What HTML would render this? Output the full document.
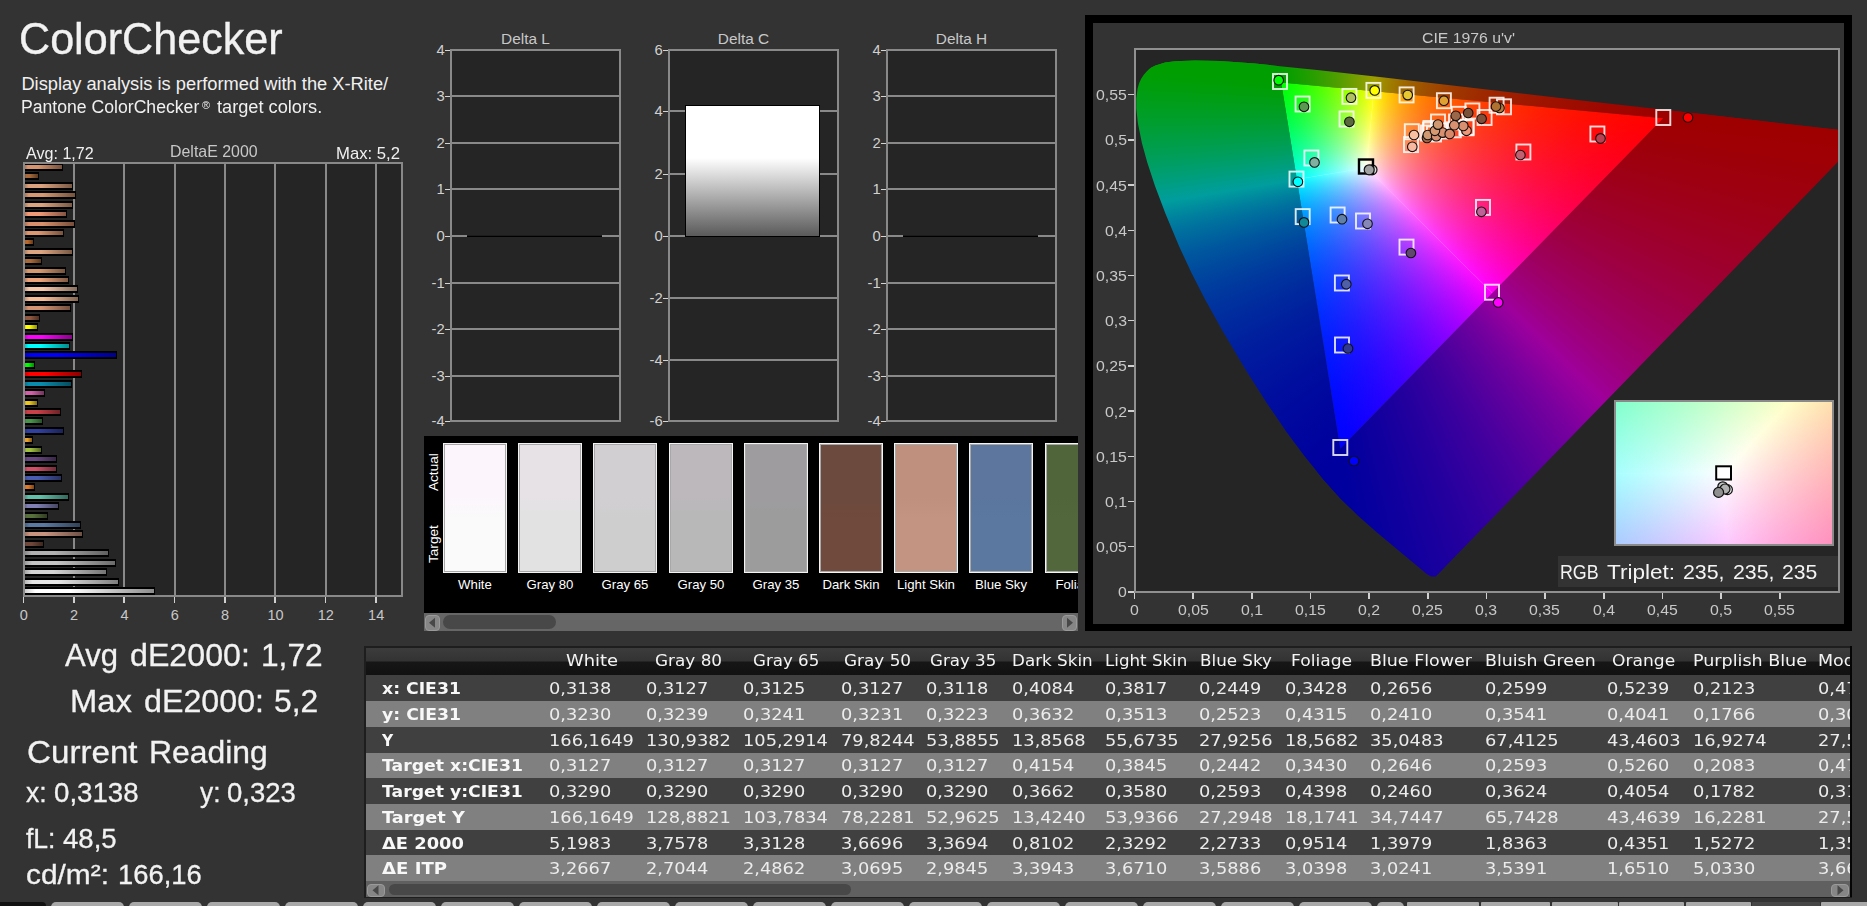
<!DOCTYPE html><html><head><meta charset="utf-8"><title>ColorChecker</title><style>
html,body{margin:0;padding:0}
body{width:1867px;height:906px;background:#333;overflow:hidden;position:relative;font-family:"Liberation Sans",sans-serif}
.t{position:absolute;white-space:nowrap;line-height:1;transform-origin:0 0}
.b{position:absolute}
.ly{position:absolute;left:0;top:0;width:100%;height:100%}
.mu{mix-blend-mode:multiply}
</style></head><body>
<span class="t" style="left:19.3px;top:17.7px;font-size:43.6px;color:#f2f2f2;transform:scaleX(0.9891);-webkit-text-stroke:.35px #f2f2f2;">ColorChecker</span>
<span class="t" style="left:21.4px;top:74.8px;font-size:18.3px;color:#f0f0f0;">Display analysis is performed with the X-Rite/</span>
<span class="t" style="left:21.4px;top:98.3px;font-size:18.3px;color:#f0f0f0;transform:scaleX(0.9638);">Pantone ColorChecker</span>
<span class="t" style="left:202.2px;top:100.2px;font-size:11px;color:#f0f0f0;transform:scaleX(0.9895);">®</span>
<span class="t" style="left:216.7px;top:98.3px;font-size:18.3px;color:#f0f0f0;transform:scaleX(0.9955);">target colors.</span>
<div class="b" style="left:23px;top:162px;width:380px;height:435px;background:#898989;"></div>
<div class="b" style="left:25px;top:164px;width:376px;height:431px;background:#252525;"></div>
<div class="b" style="left:73px;top:164px;width:2px;height:431px;background:#898989;"></div>
<div class="b" style="left:123px;top:164px;width:2px;height:431px;background:#898989;"></div>
<div class="b" style="left:174px;top:164px;width:2px;height:431px;background:#898989;"></div>
<div class="b" style="left:224px;top:164px;width:2px;height:431px;background:#898989;"></div>
<div class="b" style="left:274px;top:164px;width:2px;height:431px;background:#898989;"></div>
<div class="b" style="left:325px;top:164px;width:2px;height:431px;background:#898989;"></div>
<div class="b" style="left:375px;top:164px;width:2px;height:431px;background:#898989;"></div>
<div class="b" style="left:22.6px;top:597px;width:1.7px;height:5.6px;background:#d0d0d0;"></div>
<span class="t" style="left:19.8px;top:608.2px;font-size:14.5px;color:#c8c8c8;">0</span>
<div class="b" style="left:72.94px;top:597px;width:1.7px;height:5.6px;background:#d0d0d0;"></div>
<span class="t" style="left:70.1px;top:608.2px;font-size:14.5px;color:#c8c8c8;">2</span>
<div class="b" style="left:123.28px;top:597px;width:1.7px;height:5.6px;background:#d0d0d0;"></div>
<span class="t" style="left:120.4px;top:608.2px;font-size:14.5px;color:#c8c8c8;">4</span>
<div class="b" style="left:173.62px;top:597px;width:1.7px;height:5.6px;background:#d0d0d0;"></div>
<span class="t" style="left:170.8px;top:608.2px;font-size:14.5px;color:#c8c8c8;">6</span>
<div class="b" style="left:223.96px;top:597px;width:1.7px;height:5.6px;background:#d0d0d0;"></div>
<span class="t" style="left:221.1px;top:608.2px;font-size:14.5px;color:#c8c8c8;">8</span>
<div class="b" style="left:274.30000000000007px;top:597px;width:1.7px;height:5.6px;background:#d0d0d0;"></div>
<span class="t" style="left:267.4px;top:608.2px;font-size:14.5px;color:#c8c8c8;">10</span>
<div class="b" style="left:324.64000000000004px;top:597px;width:1.7px;height:5.6px;background:#d0d0d0;"></div>
<span class="t" style="left:317.8px;top:608.2px;font-size:14.5px;color:#c8c8c8;">12</span>
<div class="b" style="left:374.98px;top:597px;width:1.7px;height:5.6px;background:#d0d0d0;"></div>
<span class="t" style="left:368.1px;top:608.2px;font-size:14.5px;color:#c8c8c8;">14</span>
<span class="t" style="left:25.9px;top:146.3px;font-size:15.9px;color:#f0f0f0;transform:scaleX(1.0126);">Avg: 1,72</span>
<span class="t" style="left:169.6px;top:143.7px;font-size:15.7px;color:#c8c8c8;transform:scaleX(1.0147);">DeltaE 2000</span>
<span class="t" style="left:336.2px;top:146.3px;font-size:15.9px;color:#f0f0f0;transform:scaleX(1.0496);">Max: 5,2</span>
<div class="b" style="left:25px;top:164px;width:38px;height:7px;background:#000;"></div>
<div class="b" style="left:25px;top:165px;width:37px;height:4px;background:linear-gradient(90deg,#ac7658 0,#d8946e 8%,#d8946e 35%,#76513c 100%);"></div>
<div class="b" style="left:25px;top:172px;width:14px;height:8px;background:#000;"></div>
<div class="b" style="left:25px;top:174px;width:13px;height:4px;background:linear-gradient(90deg,#865430 0,#a86a3c 8%,#a86a3c 35%,#5c3a21 100%);"></div>
<div class="b" style="left:25px;top:182px;width:48px;height:8px;background:#000;"></div>
<div class="b" style="left:25px;top:184px;width:47px;height:4px;background:linear-gradient(90deg,#b08164 0,#dca27e 8%,#dca27e 35%,#795945 100%);"></div>
<div class="b" style="left:25px;top:191px;width:51px;height:8px;background:#000;"></div>
<div class="b" style="left:25px;top:193px;width:50px;height:4px;background:linear-gradient(90deg,#ab795b 0,#d69872 8%,#d69872 35%,#75533e 100%);"></div>
<div class="b" style="left:25px;top:201px;width:48px;height:8px;background:#000;"></div>
<div class="b" style="left:25px;top:203px;width:47px;height:4px;background:linear-gradient(90deg,#b08364 0,#dca47e 8%,#dca47e 35%,#795a45 100%);"></div>
<div class="b" style="left:25px;top:210px;width:42px;height:8px;background:#000;"></div>
<div class="b" style="left:25px;top:212px;width:41px;height:4px;background:linear-gradient(90deg,#c07b60 0,#f09a78 8%,#f09a78 35%,#845442 100%);"></div>
<div class="b" style="left:25px;top:220px;width:50px;height:8px;background:#000;"></div>
<div class="b" style="left:25px;top:222px;width:49px;height:4px;background:linear-gradient(90deg,#ac7356 0,#d8906c 8%,#d8906c 35%,#764f3b 100%);"></div>
<div class="b" style="left:25px;top:229px;width:39px;height:8px;background:#000;"></div>
<div class="b" style="left:25px;top:231px;width:38px;height:4px;background:linear-gradient(90deg,#b07859 0,#dc9670 8%,#dc9670 35%,#79523d 100%);"></div>
<div class="b" style="left:25px;top:238px;width:9px;height:8px;background:#000;"></div>
<div class="b" style="left:25px;top:240px;width:8px;height:4px;background:linear-gradient(90deg,#935323 0,#b8682c 8%,#b8682c 35%,#653918 100%);"></div>
<div class="b" style="left:25px;top:248px;width:48px;height:8px;background:#000;"></div>
<div class="b" style="left:25px;top:250px;width:47px;height:4px;background:linear-gradient(90deg,#b08366 0,#dca480 8%,#dca480 35%,#795a46 100%);"></div>
<div class="b" style="left:25px;top:257px;width:17px;height:8px;background:#000;"></div>
<div class="b" style="left:25px;top:259px;width:16px;height:4px;background:linear-gradient(90deg,#86542e 0,#a86a3a 8%,#a86a3a 35%,#5c3a1f 100%);"></div>
<div class="b" style="left:25px;top:267px;width:41px;height:8px;background:#000;"></div>
<div class="b" style="left:25px;top:269px;width:40px;height:4px;background:linear-gradient(90deg,#ab7b59 0,#d69a70 8%,#d69a70 35%,#75543d 100%);"></div>
<div class="b" style="left:25px;top:276px;width:44px;height:8px;background:#000;"></div>
<div class="b" style="left:25px;top:278px;width:43px;height:4px;background:linear-gradient(90deg,#bc8363 0,#eca47c 8%,#eca47c 35%,#815a44 100%);"></div>
<div class="b" style="left:25px;top:285px;width:53px;height:8px;background:#000;"></div>
<div class="b" style="left:25px;top:287px;width:52px;height:4px;background:linear-gradient(90deg,#c4a089 0,#f6c8ac 8%,#f6c8ac 35%,#876e5e 100%);"></div>
<div class="b" style="left:25px;top:295px;width:54px;height:8px;background:#000;"></div>
<div class="b" style="left:25px;top:297px;width:53px;height:4px;background:linear-gradient(90deg,#c39679 0,#f4bc98 8%,#f4bc98 35%,#866753 100%);"></div>
<div class="b" style="left:25px;top:304px;width:46px;height:8px;background:#000;"></div>
<div class="b" style="left:25px;top:306px;width:45px;height:4px;background:linear-gradient(90deg,#a9765c 0,#d49474 8%,#d49474 35%,#74513f 100%);"></div>
<div class="b" style="left:25px;top:314px;width:15px;height:8px;background:#000;"></div>
<div class="b" style="left:25px;top:316px;width:14px;height:4px;background:linear-gradient(90deg,#734633 0,#905840 8%,#905840 35%,#4f3023 100%);"></div>
<div class="b" style="left:25px;top:323px;width:13px;height:8px;background:#000;"></div>
<div class="b" style="left:25px;top:325px;width:12px;height:4px;background:linear-gradient(90deg,#cccc00 0,#ffff00 8%,#ffff00 35%,#8c8c00 100%);"></div>
<div class="b" style="left:25px;top:333px;width:48px;height:8px;background:#000;"></div>
<div class="b" style="left:25px;top:335px;width:47px;height:4px;background:linear-gradient(90deg,#cc00cc 0,#ff00ff 8%,#ff00ff 35%,#8c008c 100%);"></div>
<div class="b" style="left:25px;top:342px;width:45px;height:8px;background:#000;"></div>
<div class="b" style="left:25px;top:344px;width:44px;height:4px;background:linear-gradient(90deg,#00cccc 0,#00ffff 8%,#00ffff 35%,#008c8c 100%);"></div>
<div class="b" style="left:25px;top:351px;width:92px;height:8px;background:#000;"></div>
<div class="b" style="left:25px;top:353px;width:91px;height:4px;background:linear-gradient(90deg,#0000cc 0,#0000ff 8%,#0000ff 35%,#00008c 100%);"></div>
<div class="b" style="left:25px;top:361px;width:10px;height:8px;background:#000;"></div>
<div class="b" style="left:25px;top:363px;width:9px;height:4px;background:linear-gradient(90deg,#00cc00 0,#00ff00 8%,#00ff00 35%,#008c00 100%);"></div>
<div class="b" style="left:25px;top:370px;width:57px;height:8px;background:#000;"></div>
<div class="b" style="left:25px;top:372px;width:56px;height:4px;background:linear-gradient(90deg,#cc0000 0,#ff0000 8%,#ff0000 35%,#8c0000 100%);"></div>
<div class="b" style="left:25px;top:380px;width:47px;height:8px;background:#000;"></div>
<div class="b" style="left:25px;top:382px;width:46px;height:4px;background:linear-gradient(90deg,#087089 0,#0a8cac 8%,#0a8cac 35%,#054d5e 100%);"></div>
<div class="b" style="left:25px;top:389px;width:20px;height:8px;background:#000;"></div>
<div class="b" style="left:25px;top:391px;width:19px;height:4px;background:linear-gradient(90deg,#a64c86 0,#d060a8 8%,#d060a8 35%,#72345c 100%);"></div>
<div class="b" style="left:25px;top:399px;width:13px;height:8px;background:#000;"></div>
<div class="b" style="left:25px;top:401px;width:12px;height:4px;background:linear-gradient(90deg,#bca019 0,#ecc820 8%,#ecc820 35%,#816e11 100%);"></div>
<div class="b" style="left:25px;top:408px;width:36px;height:8px;background:#000;"></div>
<div class="b" style="left:25px;top:410px;width:35px;height:4px;background:linear-gradient(90deg,#a03339 0,#c84048 8%,#c84048 35%,#6e2327 100%);"></div>
<div class="b" style="left:25px;top:417px;width:18px;height:8px;background:#000;"></div>
<div class="b" style="left:25px;top:419px;width:17px;height:4px;background:linear-gradient(90deg,#39763b 0,#48944a 8%,#48944a 35%,#275128 100%);"></div>
<div class="b" style="left:25px;top:427px;width:39px;height:8px;background:#000;"></div>
<div class="b" style="left:25px;top:429px;width:38px;height:4px;background:linear-gradient(90deg,#263380 0,#3040a0 8%,#3040a0 35%,#1a2358 100%);"></div>
<div class="b" style="left:25px;top:436px;width:8px;height:8px;background:#000;"></div>
<div class="b" style="left:25px;top:438px;width:7px;height:4px;background:linear-gradient(90deg,#b98023 0,#e8a02c 8%,#e8a02c 35%,#7f5818 100%);"></div>
<div class="b" style="left:25px;top:446px;width:17px;height:8px;background:#000;"></div>
<div class="b" style="left:25px;top:448px;width:16px;height:4px;background:linear-gradient(90deg,#809933 0,#a0c040 8%,#a0c040 35%,#586923 100%);"></div>
<div class="b" style="left:25px;top:455px;width:32px;height:8px;background:#000;"></div>
<div class="b" style="left:25px;top:457px;width:31px;height:4px;background:linear-gradient(90deg,#533966 0,#684880 8%,#684880 35%,#392746 100%);"></div>
<div class="b" style="left:25px;top:465px;width:32px;height:8px;background:#000;"></div>
<div class="b" style="left:25px;top:467px;width:31px;height:4px;background:linear-gradient(90deg,#a64053 0,#d05068 8%,#d05068 35%,#722c39 100%);"></div>
<div class="b" style="left:25px;top:474px;width:37px;height:8px;background:#000;"></div>
<div class="b" style="left:25px;top:476px;width:36px;height:4px;background:linear-gradient(90deg,#3b498c 0,#4a5cb0 8%,#4a5cb0 35%,#283260 100%);"></div>
<div class="b" style="left:25px;top:483px;width:10px;height:8px;background:#000;"></div>
<div class="b" style="left:25px;top:485px;width:9px;height:4px;background:linear-gradient(90deg,#b36120 0,#e07a28 8%,#e07a28 35%,#7b4316 100%);"></div>
<div class="b" style="left:25px;top:493px;width:44px;height:8px;background:#000;"></div>
<div class="b" style="left:25px;top:495px;width:43px;height:4px;background:linear-gradient(90deg,#4c9986 0,#60c0a8 8%,#60c0a8 35%,#34695c 100%);"></div>
<div class="b" style="left:25px;top:502px;width:34px;height:8px;background:#000;"></div>
<div class="b" style="left:25px;top:504px;width:33px;height:4px;background:linear-gradient(90deg,#666690 0,#8080b4 8%,#8080b4 35%,#464663 100%);"></div>
<div class="b" style="left:25px;top:512px;width:23px;height:8px;background:#000;"></div>
<div class="b" style="left:25px;top:514px;width:22px;height:4px;background:linear-gradient(90deg,#465930 0,#58703c 8%,#58703c 35%,#303d21 100%);"></div>
<div class="b" style="left:25px;top:521px;width:56px;height:8px;background:#000;"></div>
<div class="b" style="left:25px;top:523px;width:55px;height:4px;background:linear-gradient(90deg,#486080 0,#5a78a0 8%,#5a78a0 35%,#314258 100%);"></div>
<div class="b" style="left:25px;top:530px;width:58px;height:8px;background:#000;"></div>
<div class="b" style="left:25px;top:532px;width:57px;height:4px;background:linear-gradient(90deg,#a07666 0,#c89480 8%,#c89480 35%,#6e5146 100%);"></div>
<div class="b" style="left:25px;top:540px;width:19px;height:8px;background:#000;"></div>
<div class="b" style="left:25px;top:542px;width:18px;height:4px;background:linear-gradient(90deg,#59392e 0,#70483a 8%,#70483a 35%,#3d271f 100%);"></div>
<div class="b" style="left:25px;top:549px;width:84px;height:8px;background:#000;"></div>
<div class="b" style="left:25px;top:551px;width:83px;height:4px;background:linear-gradient(90deg,#8c8c8c 0,#b0b0b0 8%,#b0b0b0 35%,#606060 100%);"></div>
<div class="b" style="left:25px;top:559px;width:91px;height:8px;background:#000;"></div>
<div class="b" style="left:25px;top:561px;width:90px;height:4px;background:linear-gradient(90deg,#9c9c9c 0,#c4c4c4 8%,#c4c4c4 35%,#6b6b6b 100%);"></div>
<div class="b" style="left:25px;top:568px;width:82px;height:8px;background:#000;"></div>
<div class="b" style="left:25px;top:570px;width:81px;height:4px;background:linear-gradient(90deg,#a9a9a9 0,#d4d4d4 8%,#d4d4d4 35%,#747474 100%);"></div>
<div class="b" style="left:25px;top:578px;width:94px;height:8px;background:#000;"></div>
<div class="b" style="left:25px;top:580px;width:93px;height:4px;background:linear-gradient(90deg,#b8b8b8 0,#e6e6e6 8%,#e6e6e6 35%,#7e7e7e 100%);"></div>
<div class="b" style="left:25px;top:587px;width:130px;height:8px;background:#000;"></div>
<div class="b" style="left:25px;top:589px;width:129px;height:4px;background:linear-gradient(90deg,#cccccc 0,#ffffff 8%,#ffffff 35%,#8c8c8c 100%);"></div>
<div class="b" style="left:23px;top:162px;width:2px;height:435px;background:#898989;"></div>
<div class="b" style="left:450px;top:49px;width:171px;height:373px;background:#898989;"></div>
<div class="b" style="left:452px;top:51px;width:167px;height:369px;background:#252525;"></div>
<div class="b" style="left:445px;top:49.6px;width:5px;height:1.5px;background:#d4d4d4;"></div>
<span class="t" style="left:436.6px;top:42.7px;font-size:14.8px;color:#d0d0d0;">4</span>
<div class="b" style="left:452px;top:95.3px;width:167px;height:1.9px;background:#898989;"></div>
<div class="b" style="left:445px;top:95.6px;width:5px;height:1.5px;background:#d4d4d4;"></div>
<span class="t" style="left:436.6px;top:88.7px;font-size:14.8px;color:#d0d0d0;">3</span>
<div class="b" style="left:452px;top:142.3px;width:167px;height:1.9px;background:#898989;"></div>
<div class="b" style="left:445px;top:142.6px;width:5px;height:1.5px;background:#d4d4d4;"></div>
<span class="t" style="left:436.6px;top:135.7px;font-size:14.8px;color:#d0d0d0;">2</span>
<div class="b" style="left:452px;top:188.3px;width:167px;height:1.9px;background:#898989;"></div>
<div class="b" style="left:445px;top:188.6px;width:5px;height:1.5px;background:#d4d4d4;"></div>
<span class="t" style="left:436.6px;top:181.7px;font-size:14.8px;color:#d0d0d0;">1</span>
<div class="b" style="left:452px;top:235.3px;width:167px;height:1.9px;background:#898989;"></div>
<div class="b" style="left:445px;top:235.6px;width:5px;height:1.5px;background:#d4d4d4;"></div>
<span class="t" style="left:436.6px;top:228.7px;font-size:14.8px;color:#d0d0d0;">0</span>
<div class="b" style="left:452px;top:282.3px;width:167px;height:1.9px;background:#898989;"></div>
<div class="b" style="left:445px;top:282.6px;width:5px;height:1.5px;background:#d4d4d4;"></div>
<span class="t" style="left:431.6px;top:275.7px;font-size:14.8px;color:#d0d0d0;">-1</span>
<div class="b" style="left:452px;top:328.3px;width:167px;height:1.9px;background:#898989;"></div>
<div class="b" style="left:445px;top:328.6px;width:5px;height:1.5px;background:#d4d4d4;"></div>
<span class="t" style="left:431.6px;top:321.7px;font-size:14.8px;color:#d0d0d0;">-2</span>
<div class="b" style="left:452px;top:375.3px;width:167px;height:1.9px;background:#898989;"></div>
<div class="b" style="left:445px;top:375.6px;width:5px;height:1.5px;background:#d4d4d4;"></div>
<span class="t" style="left:431.6px;top:368.7px;font-size:14.8px;color:#d0d0d0;">-3</span>
<div class="b" style="left:445px;top:420.6px;width:5px;height:1.5px;background:#d4d4d4;"></div>
<span class="t" style="left:431.6px;top:413.7px;font-size:14.8px;color:#d0d0d0;">-4</span>
<span class="t" style="left:501.1px;top:31.2px;font-size:15.4px;color:#c8c8c8;">Delta L</span>
<div class="b" style="left:668px;top:49px;width:171px;height:373px;background:#898989;"></div>
<div class="b" style="left:670px;top:51px;width:167px;height:369px;background:#252525;"></div>
<div class="b" style="left:663px;top:49.6px;width:5px;height:1.5px;background:#d4d4d4;"></div>
<span class="t" style="left:654.6px;top:42.7px;font-size:14.8px;color:#d0d0d0;">6</span>
<div class="b" style="left:670px;top:110.3px;width:167px;height:1.9px;background:#898989;"></div>
<div class="b" style="left:663px;top:110.6px;width:5px;height:1.5px;background:#d4d4d4;"></div>
<span class="t" style="left:654.6px;top:103.7px;font-size:14.8px;color:#d0d0d0;">4</span>
<div class="b" style="left:670px;top:173.3px;width:167px;height:1.9px;background:#898989;"></div>
<div class="b" style="left:663px;top:173.6px;width:5px;height:1.5px;background:#d4d4d4;"></div>
<span class="t" style="left:654.6px;top:166.7px;font-size:14.8px;color:#d0d0d0;">2</span>
<div class="b" style="left:670px;top:235.3px;width:167px;height:1.9px;background:#898989;"></div>
<div class="b" style="left:663px;top:235.6px;width:5px;height:1.5px;background:#d4d4d4;"></div>
<span class="t" style="left:654.6px;top:228.7px;font-size:14.8px;color:#d0d0d0;">0</span>
<div class="b" style="left:670px;top:297.3px;width:167px;height:1.9px;background:#898989;"></div>
<div class="b" style="left:663px;top:297.6px;width:5px;height:1.5px;background:#d4d4d4;"></div>
<span class="t" style="left:649.6px;top:290.7px;font-size:14.8px;color:#d0d0d0;">-2</span>
<div class="b" style="left:670px;top:359.3px;width:167px;height:1.9px;background:#898989;"></div>
<div class="b" style="left:663px;top:359.6px;width:5px;height:1.5px;background:#d4d4d4;"></div>
<span class="t" style="left:649.6px;top:352.7px;font-size:14.8px;color:#d0d0d0;">-4</span>
<div class="b" style="left:663px;top:420.6px;width:5px;height:1.5px;background:#d4d4d4;"></div>
<span class="t" style="left:649.6px;top:413.7px;font-size:14.8px;color:#d0d0d0;">-6</span>
<span class="t" style="left:717.8px;top:31.2px;font-size:15.4px;color:#c8c8c8;">Delta C</span>
<div class="b" style="left:886px;top:49px;width:171px;height:373px;background:#898989;"></div>
<div class="b" style="left:888px;top:51px;width:167px;height:369px;background:#252525;"></div>
<div class="b" style="left:881px;top:49.6px;width:5px;height:1.5px;background:#d4d4d4;"></div>
<span class="t" style="left:872.6px;top:42.7px;font-size:14.8px;color:#d0d0d0;">4</span>
<div class="b" style="left:888px;top:95.3px;width:167px;height:1.9px;background:#898989;"></div>
<div class="b" style="left:881px;top:95.6px;width:5px;height:1.5px;background:#d4d4d4;"></div>
<span class="t" style="left:872.6px;top:88.7px;font-size:14.8px;color:#d0d0d0;">3</span>
<div class="b" style="left:888px;top:142.3px;width:167px;height:1.9px;background:#898989;"></div>
<div class="b" style="left:881px;top:142.6px;width:5px;height:1.5px;background:#d4d4d4;"></div>
<span class="t" style="left:872.6px;top:135.7px;font-size:14.8px;color:#d0d0d0;">2</span>
<div class="b" style="left:888px;top:188.3px;width:167px;height:1.9px;background:#898989;"></div>
<div class="b" style="left:881px;top:188.6px;width:5px;height:1.5px;background:#d4d4d4;"></div>
<span class="t" style="left:872.6px;top:181.7px;font-size:14.8px;color:#d0d0d0;">1</span>
<div class="b" style="left:888px;top:235.3px;width:167px;height:1.9px;background:#898989;"></div>
<div class="b" style="left:881px;top:235.6px;width:5px;height:1.5px;background:#d4d4d4;"></div>
<span class="t" style="left:872.6px;top:228.7px;font-size:14.8px;color:#d0d0d0;">0</span>
<div class="b" style="left:888px;top:282.3px;width:167px;height:1.9px;background:#898989;"></div>
<div class="b" style="left:881px;top:282.6px;width:5px;height:1.5px;background:#d4d4d4;"></div>
<span class="t" style="left:867.6px;top:275.7px;font-size:14.8px;color:#d0d0d0;">-1</span>
<div class="b" style="left:888px;top:328.3px;width:167px;height:1.9px;background:#898989;"></div>
<div class="b" style="left:881px;top:328.6px;width:5px;height:1.5px;background:#d4d4d4;"></div>
<span class="t" style="left:867.6px;top:321.7px;font-size:14.8px;color:#d0d0d0;">-2</span>
<div class="b" style="left:888px;top:375.3px;width:167px;height:1.9px;background:#898989;"></div>
<div class="b" style="left:881px;top:375.6px;width:5px;height:1.5px;background:#d4d4d4;"></div>
<span class="t" style="left:867.6px;top:368.7px;font-size:14.8px;color:#d0d0d0;">-3</span>
<div class="b" style="left:881px;top:420.6px;width:5px;height:1.5px;background:#d4d4d4;"></div>
<span class="t" style="left:867.6px;top:413.7px;font-size:14.8px;color:#d0d0d0;">-4</span>
<span class="t" style="left:935.8px;top:31.2px;font-size:15.4px;color:#c8c8c8;">Delta H</span>
<div class="b" style="left:467px;top:235.2px;width:135.2px;height:2.1px;background:#1c1c1c;"></div>
<div class="b" style="left:467px;top:235.8px;width:135.2px;height:1.2px;background:#000;"></div>
<div class="b" style="left:903px;top:235.2px;width:135.2px;height:2.1px;background:#1c1c1c;"></div>
<div class="b" style="left:903px;top:235.8px;width:135.2px;height:1.2px;background:#000;"></div>
<div class="b" style="left:685px;top:105px;width:135px;height:132px;background:#000;"></div>
<div class="b" style="left:686px;top:106px;width:133px;height:130px;background:linear-gradient(180deg,#fff 0,#fff 40%,#5a5a5a 100%);"></div>
<div class="b" style="left:424px;top:436px;width:654px;height:177px;background:#000;overflow:hidden">
<div class="b" style="left:19px;top:7px;width:64px;height:130px;background:#f4f4f4;"></div>
<div class="b" style="left:20px;top:8px;width:62px;height:128px;background:#a8a8a8;"></div>
<div class="b" style="left:21px;top:9px;width:60px;height:126px;background:linear-gradient(180deg,#fcf6fc 0,#fcf6fc 42%,#fafafa 58%,#fafafa 100%);"></div>
<span class="t" style="left:34.1px;top:141.5px;font-size:13.2px;color:#fff;">White</span>
<div class="b" style="left:94px;top:7px;width:64px;height:130px;background:#f4f4f4;"></div>
<div class="b" style="left:95px;top:8px;width:62px;height:128px;background:#a8a8a8;"></div>
<div class="b" style="left:96px;top:9px;width:60px;height:126px;background:linear-gradient(180deg,#e6e2e6 0,#e6e2e6 42%,#e2e2e2 58%,#e2e2e2 100%);"></div>
<span class="t" style="left:102.5px;top:141.5px;font-size:13.2px;color:#fff;">Gray 80</span>
<div class="b" style="left:169px;top:7px;width:64px;height:130px;background:#f4f4f4;"></div>
<div class="b" style="left:170px;top:8px;width:62px;height:128px;background:#a8a8a8;"></div>
<div class="b" style="left:171px;top:9px;width:60px;height:126px;background:linear-gradient(180deg,#d2cfd3 0,#d2cfd3 42%,#cecece 58%,#cecece 100%);"></div>
<span class="t" style="left:177.5px;top:141.5px;font-size:13.2px;color:#fff;">Gray 65</span>
<div class="b" style="left:245px;top:7px;width:64px;height:130px;background:#f4f4f4;"></div>
<div class="b" style="left:246px;top:8px;width:62px;height:128px;background:#a8a8a8;"></div>
<div class="b" style="left:247px;top:9px;width:60px;height:126px;background:linear-gradient(180deg,#bcb8bc 0,#bcb8bc 42%,#b8b8b8 58%,#b8b8b8 100%);"></div>
<span class="t" style="left:253.5px;top:141.5px;font-size:13.2px;color:#fff;">Gray 50</span>
<div class="b" style="left:320px;top:7px;width:64px;height:130px;background:#f4f4f4;"></div>
<div class="b" style="left:321px;top:8px;width:62px;height:128px;background:#a8a8a8;"></div>
<div class="b" style="left:322px;top:9px;width:60px;height:126px;background:linear-gradient(180deg,#9e9c9f 0,#9e9c9f 42%,#9c9c9c 58%,#9c9c9c 100%);"></div>
<span class="t" style="left:328.5px;top:141.5px;font-size:13.2px;color:#fff;">Gray 35</span>
<div class="b" style="left:395px;top:7px;width:64px;height:130px;background:#f4f4f4;"></div>
<div class="b" style="left:396px;top:8px;width:62px;height:128px;background:#a8a8a8;"></div>
<div class="b" style="left:397px;top:9px;width:60px;height:126px;background:linear-gradient(180deg,#6c4a3e 0,#6c4a3e 42%,#704a3c 58%,#704a3c 100%);"></div>
<span class="t" style="left:398.4px;top:141.5px;font-size:13.2px;color:#fff;">Dark Skin</span>
<div class="b" style="left:470px;top:7px;width:64px;height:130px;background:#f4f4f4;"></div>
<div class="b" style="left:471px;top:8px;width:62px;height:128px;background:#a8a8a8;"></div>
<div class="b" style="left:472px;top:9px;width:60px;height:126px;background:linear-gradient(180deg,#c0907e 0,#c0907e 42%,#c49482 58%,#c49482 100%);"></div>
<span class="t" style="left:473.0px;top:141.5px;font-size:13.2px;color:#fff;">Light Skin</span>
<div class="b" style="left:545px;top:7px;width:64px;height:130px;background:#f4f4f4;"></div>
<div class="b" style="left:546px;top:8px;width:62px;height:128px;background:#a8a8a8;"></div>
<div class="b" style="left:547px;top:9px;width:60px;height:126px;background:linear-gradient(180deg,#5c769e 0,#5c769e 42%,#5a78a0 58%,#5a78a0 100%);"></div>
<span class="t" style="left:551.0px;top:141.5px;font-size:13.2px;color:#fff;">Blue Sky</span>
<div class="b" style="left:621px;top:7px;width:64px;height:130px;background:#f4f4f4;"></div>
<div class="b" style="left:622px;top:8px;width:62px;height:128px;background:#a8a8a8;"></div>
<div class="b" style="left:623px;top:9px;width:60px;height:126px;background:linear-gradient(180deg,#50663a 0,#50663a 42%,#52683c 58%,#52683c 100%);"></div>
<span class="t" style="left:631.4px;top:141.5px;font-size:13.2px;color:#fff;">Foliage</span>
<span class="t" style="left:3px;top:54.5px;font-size:13.6px;color:#fff;transform-origin:0 0;transform:rotate(-90deg) scaleX(1.0)">Actual</span>
<span class="t" style="left:3px;top:127px;font-size:13.6px;color:#fff;transform-origin:0 0;transform:rotate(-90deg) scaleX(1.0)">Target</span>
</div>
<div class="b" style="left:424px;top:613px;width:654px;height:18px;background:#666;"></div>
<div class="b" style="left:425px;top:615px;width:13px;height:14px;background:#868686;border-radius:4px;border:1px solid #9a9a9a"></div>
<div class="b" style="left:1062px;top:615px;width:13px;height:14px;background:#868686;border-radius:4px;border:1px solid #9a9a9a"></div>
<svg class="b" style="left:424px;top:613px" width="654" height="18"><path d="M5.0 9.0 L11.0 4.0 V14.0Z M649.0 9.0 L643.0 4.0 V14.0Z" fill="#484848" transform="translate(0 .8)"/></svg>
<div class="b" style="left:443px;top:615px;width:113px;height:14px;background:#484848;border-radius:7.0px"></div>
<div class="b" style="left:1085px;top:15px;width:767px;height:616px;background:#000;"></div>
<div class="b" style="left:1093px;top:23px;width:751px;height:601px;background:#333;"></div>
<span class="t" style="left:1422.0px;top:29.9px;font-size:15.4px;color:#c8c8c8;transform:scaleX(1.0261);">CIE 1976 u'v'</span>
<div class="b" style="left:1134px;top:48px;width:706px;height:545px;background:#909090;"></div>
<div class="b" style="left:1136px;top:50px;width:702px;height:541px;background:#252525;overflow:hidden">
<div class="ly" style="clip-path:polygon(299.8px 526.5px,295.0px 526.5px,290.7px 523.9px,240.7px 482.3px,222.0px 465.7px,204.2px 448.2px,187.4px 429.6px,168.6px 406.3px,150.7px 382.2px,130.9px 353.3px,109.5px 319.5px,86.5px 280.8px,69.5px 250.2px,55.8px 223.5px,43.1px 196.3px,29.6px 164.1px,19.0px 136.0px,11.2px 112.2px,5.9px 92.9px,1.9px 73.3px,0.3px 58.4px,0.3px 48.4px,1.6px 38.4px,3.0px 33.6px,5.0px 29.0px,7.8px 24.7px,11.1px 20.9px,15.0px 17.8px,19.5px 15.4px,29.1px 12.5px,39.0px 11.2px,59.0px 10.5px,84.0px 11.1px,118.9px 13.6px,183.5px 20.3px,248.1px 27.6px,307.7px 34.5px,372.3px 41.9px,436.9px 49.4px,496.5px 56.2px,561.0px 63.6px,625.6px 71.1px,690.2px 78.5px,729.9px 83.1px);isolation:isolate"><div class="ly" style="background:conic-gradient(from 313.09deg at 145.2px 32.4px,#9e0000 142.27deg,#9e0003 143.84deg,#9e0006 145.41deg,#9e000a 146.99deg,#9e000d 148.56deg,#9e0011 150.13deg,#9e0015 151.70deg,#9e001a 153.27deg,#9e001e 154.85deg,#9e0023 156.42deg,#9e0028 157.99deg,#9e002d 159.56deg,#9e0032 161.13deg,#9e0038 162.71deg,#9e003e 164.28deg,#9e0044 165.85deg,#9e004b 167.42deg,#9e0052 169.00deg,#9e0059 170.57deg,#9e0061 172.14deg,#9e0069 173.71deg,#9e0072 175.28deg,#9e007b 176.86deg,#9e0085 178.43deg,#9e0090 180.00deg,#9e009c 181.57deg,#94009e 183.14deg,#89009e 184.72deg,#7e009e 186.29deg,#74009e 187.86deg,#6b009e 189.43deg,#62009e 191.00deg,#5a009e 192.58deg,#52009e 194.15deg,#4a009e 195.72deg,#43009e 197.29deg,#3c009e 198.87deg,#36009e 200.44deg,#30009e 202.01deg,#2a009e 203.58deg,#24009e 205.15deg,#1f009e 206.73deg,#1a009e 208.30deg,#15009e 209.87deg,#10009e 211.44deg,#0c009e 213.01deg,#07009e 214.59deg,#03009e 216.16deg,#00009e 217.73deg);clip-path:polygon(-2592.1px 3258.7px,3323.7px -2791.8px,6183.8px 4.7px,268.0px 6055.1px)"></div><div class="ly" style="background:conic-gradient(from 197.59deg at 204.3px 398.6px,#009e00 153.23deg,#079e00 154.35deg,#109e00 155.46deg,#199e00 156.58deg,#239e00 157.69deg,#2e9e00 158.81deg,#399e00 159.92deg,#459e00 161.04deg,#529e00 162.15deg,#609e00 163.27deg,#6e9e00 164.39deg,#7d9e00 165.50deg,#8d9e00 166.62deg,#9e9e00 167.73deg,#9e8e00 168.85deg,#9e8000 169.96deg,#9e7400 171.08deg,#9e6a00 172.19deg,#9e6000 173.31deg,#9e5800 174.42deg,#9e5000 175.54deg,#9e4a00 176.65deg,#9e4400 177.77deg,#9e3e00 178.88deg,#9e3900 180.00deg,#9e3400 181.12deg,#9e3000 182.23deg,#9e2c00 183.35deg,#9e2800 184.46deg,#9e2500 185.58deg,#9e2200 186.69deg,#9e1f00 187.81deg,#9e1c00 188.92deg,#9e1900 190.04deg,#9e1700 191.15deg,#9e1400 192.27deg,#9e1200 193.38deg,#9e1000 194.50deg,#9e0e00 195.61deg,#9e0c00 196.73deg,#9e0b00 197.85deg,#9e0900 198.96deg,#9e0700 200.08deg,#9e0600 201.19deg,#9e0500 202.31deg,#9e0300 203.42deg,#9e0200 204.54deg,#9e0100 205.65deg,#9e0000 206.77deg);clip-path:polygon(4509.8px 441.9px,-3837.4px -341.2px,-3463.8px -4323.7px,4883.4px -3540.6px)"></div><div class="ly" style="background:conic-gradient(from 69.86deg at 527.3px 68.3px,#00009e 154.50deg,#00019e 155.56deg,#00029e 156.62deg,#00049e 157.69deg,#00059e 158.75deg,#00069e 159.81deg,#00089e 160.87deg,#000a9e 161.94deg,#000c9e 163.00deg,#000d9e 164.06deg,#000f9e 165.12deg,#00129e 166.19deg,#00149e 167.25deg,#00169e 168.31deg,#00199e 169.37deg,#001b9e 170.44deg,#001e9e 171.50deg,#00219e 172.56deg,#00259e 173.62deg,#00289e 174.69deg,#002c9e 175.75deg,#00309e 176.81deg,#00349e 177.87deg,#00399e 178.94deg,#003e9e 180.00deg,#00449e 181.06deg,#004a9e 182.13deg,#00519e 183.19deg,#00589e 184.25deg,#00619e 185.31deg,#006a9e 186.38deg,#00749e 187.44deg,#00809e 188.50deg,#008e9e 189.56deg,#009d9e 190.63deg,#009e8f 191.69deg,#009e7f 192.75deg,#009e71 193.81deg,#009e63 194.88deg,#009e56 195.94deg,#009e4a 197.00deg,#009e3f 198.06deg,#009e34 199.13deg,#009e29 200.19deg,#009e20 201.25deg,#009e17 202.31deg,#009e0e 203.38deg,#009e06 204.44deg,#009e00 205.50deg);clip-path:polygon(-493.0px -3916.3px,842.5px 4347.4px,-3106.2px 4985.6px,-4441.8px -3278.1px)"></div><div class="ly" style="background:#fff;isolation:isolate;clip-path:polygon(527.3px 68.3px,145.2px 32.4px,204.3px 398.6px)"><div class="ly mu" style="background:conic-gradient(from 197.59deg at 204.3px 398.6px,#00ffff 153.23deg,#0cffff 154.35deg,#19ffff 155.46deg,#28ffff 156.58deg,#39ffff 157.69deg,#4affff 158.81deg,#5cffff 159.92deg,#70ffff 161.04deg,#84ffff 162.15deg,#9affff 163.27deg,#b1ffff 164.39deg,#c9ffff 165.50deg,#e3ffff 166.62deg,#feffff 167.73deg,#ffe6ff 168.85deg,#ffcfff 169.96deg,#ffbcff 171.08deg,#ffaaff 172.19deg,#ff9bff 173.31deg,#ff8eff 174.42deg,#ff82ff 175.54deg,#ff77ff 176.65deg,#ff6dff 177.77deg,#ff64ff 178.88deg,#ff5cff 180.00deg,#ff54ff 181.12deg,#ff4dff 182.23deg,#ff47ff 183.35deg,#ff41ff 184.46deg,#ff3bff 185.58deg,#ff36ff 186.69deg,#ff31ff 187.81deg,#ff2dff 188.92deg,#ff29ff 190.04deg,#ff25ff 191.15deg,#ff21ff 192.27deg,#ff1dff 193.38deg,#ff1aff 194.50deg,#ff17ff 195.61deg,#ff14ff 196.73deg,#ff11ff 197.85deg,#ff0eff 198.96deg,#ff0cff 200.08deg,#ff0aff 201.19deg,#ff07ff 202.31deg,#ff05ff 203.42deg,#ff03ff 204.54deg,#ff01ff 205.65deg,#ff00ff 206.77deg);clip-path:polygon(230.6px 117.7px,431.9px 318.3px,705.3px 38.7px,93.9px -18.7px,118.9px 136.2px)"></div><div class="ly mu" style="background:conic-gradient(from 313.09deg at 145.2px 32.4px,#ffff00 142.27deg,#ffff04 143.84deg,#ffff0a 145.41deg,#ffff0f 146.99deg,#ffff15 148.56deg,#ffff1c 150.13deg,#ffff22 151.70deg,#ffff29 153.27deg,#ffff31 154.85deg,#ffff38 156.42deg,#ffff40 157.99deg,#ffff48 159.56deg,#ffff51 161.13deg,#ffff5a 162.71deg,#ffff64 164.28deg,#ffff6e 165.85deg,#ffff78 167.42deg,#ffff83 169.00deg,#ffff8f 170.57deg,#ffff9c 172.14deg,#ffffa9 173.71deg,#ffffb7 175.28deg,#ffffc7 176.86deg,#ffffd7 178.43deg,#ffffe9 180.00deg,#fffffc 181.57deg,#efffff 183.14deg,#dcffff 184.72deg,#cbffff 186.29deg,#bbffff 187.86deg,#acffff 189.43deg,#9effff 191.00deg,#91ffff 192.58deg,#84ffff 194.15deg,#78ffff 195.72deg,#6cffff 197.29deg,#61ffff 198.87deg,#57ffff 200.44deg,#4dffff 202.01deg,#44ffff 203.58deg,#3affff 205.15deg,#32ffff 206.73deg,#29ffff 208.30deg,#21ffff 209.87deg,#1affff 211.44deg,#13ffff 213.01deg,#0cffff 214.59deg,#05ffff 216.16deg,#00ffff 217.73deg);clip-path:polygon(230.6px 117.7px,242.1px -4.8px,705.3px 38.7px,188.6px 567.2px,118.9px 136.2px)"></div><div class="ly mu" style="background:conic-gradient(from 69.86deg at 527.3px 68.3px,#ff00ff 154.50deg,#ff02ff 155.56deg,#ff04ff 156.62deg,#ff06ff 157.69deg,#ff08ff 158.75deg,#ff0aff 159.81deg,#ff0dff 160.87deg,#ff10ff 161.94deg,#ff13ff 163.00deg,#ff16ff 164.06deg,#ff19ff 165.12deg,#ff1cff 166.19deg,#ff20ff 167.25deg,#ff24ff 168.31deg,#ff28ff 169.37deg,#ff2cff 170.44deg,#ff31ff 171.50deg,#ff36ff 172.56deg,#ff3bff 173.62deg,#ff41ff 174.69deg,#ff47ff 175.75deg,#ff4dff 176.81deg,#ff55ff 177.87deg,#ff5cff 178.94deg,#ff65ff 180.00deg,#ff6eff 181.06deg,#ff78ff 182.13deg,#ff82ff 183.19deg,#ff8fff 184.25deg,#ff9cff 185.31deg,#ffabff 186.38deg,#ffbcff 187.44deg,#ffcfff 188.50deg,#ffe4ff 189.56deg,#fffdff 190.63deg,#ffffe6 191.69deg,#ffffce 192.75deg,#ffffb6 193.81deg,#ffffa0 194.88deg,#ffff8b 195.94deg,#ffff78 197.00deg,#ffff65 198.06deg,#ffff53 199.13deg,#ffff43 200.19deg,#ffff33 201.25deg,#ffff24 202.31deg,#ffff17 203.38deg,#ffff0a 204.44deg,#ffff00 205.50deg);clip-path:polygon(230.6px 117.7px,242.1px -4.8px,93.9px -18.7px,188.6px 567.2px,431.9px 318.3px)"></div></div></div>
</div>
<div class="b" style="left:1133.65px;top:593px;width:1.7px;height:5.6px;background:#d0d0d0;"></div>
<span class="t" style="left:1129.8px;top:603.1px;font-size:14.8px;color:#c8c8c8;transform:scaleX(1.0700);">0</span>
<div class="b" style="left:1127.6px;top:591.15px;width:6.4px;height:1.5px;background:#d0d0d0;"></div>
<span class="t" style="left:1117.8px;top:585.3px;font-size:14.8px;color:#c8c8c8;transform:scaleX(1.0700);">0</span>
<div class="b" style="left:1192.315px;top:593px;width:1.7px;height:5.6px;background:#d0d0d0;"></div>
<span class="t" style="left:1177.5px;top:603.1px;font-size:14.8px;color:#c8c8c8;transform:scaleX(1.0700);">0,05</span>
<div class="b" style="left:1127.6px;top:545.9499999999999px;width:6.4px;height:1.5px;background:#d0d0d0;"></div>
<span class="t" style="left:1095.8px;top:540.1px;font-size:14.8px;color:#c8c8c8;transform:scaleX(1.0700);">0,05</span>
<div class="b" style="left:1250.98px;top:593px;width:1.7px;height:5.6px;background:#d0d0d0;"></div>
<span class="t" style="left:1240.5px;top:603.1px;font-size:14.8px;color:#c8c8c8;transform:scaleX(1.0700);">0,1</span>
<div class="b" style="left:1127.6px;top:500.75px;width:6.4px;height:1.5px;background:#d0d0d0;"></div>
<span class="t" style="left:1104.6px;top:494.9px;font-size:14.8px;color:#c8c8c8;transform:scaleX(1.0700);">0,1</span>
<div class="b" style="left:1309.6450000000002px;top:593px;width:1.7px;height:5.6px;background:#d0d0d0;"></div>
<span class="t" style="left:1294.8px;top:603.1px;font-size:14.8px;color:#c8c8c8;transform:scaleX(1.0700);">0,15</span>
<div class="b" style="left:1127.6px;top:455.54999999999995px;width:6.4px;height:1.5px;background:#d0d0d0;"></div>
<span class="t" style="left:1095.8px;top:449.7px;font-size:14.8px;color:#c8c8c8;transform:scaleX(1.0700);">0,15</span>
<div class="b" style="left:1368.3100000000002px;top:593px;width:1.7px;height:5.6px;background:#d0d0d0;"></div>
<span class="t" style="left:1357.9px;top:603.1px;font-size:14.8px;color:#c8c8c8;transform:scaleX(1.0700);">0,2</span>
<div class="b" style="left:1127.6px;top:410.34999999999997px;width:6.4px;height:1.5px;background:#d0d0d0;"></div>
<span class="t" style="left:1104.6px;top:404.5px;font-size:14.8px;color:#c8c8c8;transform:scaleX(1.0700);">0,2</span>
<div class="b" style="left:1426.9750000000001px;top:593px;width:1.7px;height:5.6px;background:#d0d0d0;"></div>
<span class="t" style="left:1412.1px;top:603.1px;font-size:14.8px;color:#c8c8c8;transform:scaleX(1.0700);">0,25</span>
<div class="b" style="left:1127.6px;top:365.15px;width:6.4px;height:1.5px;background:#d0d0d0;"></div>
<span class="t" style="left:1095.8px;top:359.3px;font-size:14.8px;color:#c8c8c8;transform:scaleX(1.0700);">0,25</span>
<div class="b" style="left:1485.64px;top:593px;width:1.7px;height:5.6px;background:#d0d0d0;"></div>
<span class="t" style="left:1475.2px;top:603.1px;font-size:14.8px;color:#c8c8c8;transform:scaleX(1.0700);">0,3</span>
<div class="b" style="left:1127.6px;top:319.94999999999993px;width:6.4px;height:1.5px;background:#d0d0d0;"></div>
<span class="t" style="left:1104.6px;top:314.1px;font-size:14.8px;color:#c8c8c8;transform:scaleX(1.0700);">0,3</span>
<div class="b" style="left:1544.305px;top:593px;width:1.7px;height:5.6px;background:#d0d0d0;"></div>
<span class="t" style="left:1529.4px;top:603.1px;font-size:14.8px;color:#c8c8c8;transform:scaleX(1.0700);">0,35</span>
<div class="b" style="left:1127.6px;top:274.74999999999994px;width:6.4px;height:1.5px;background:#d0d0d0;"></div>
<span class="t" style="left:1095.8px;top:268.9px;font-size:14.8px;color:#c8c8c8;transform:scaleX(1.0700);">0,35</span>
<div class="b" style="left:1602.97px;top:593px;width:1.7px;height:5.6px;background:#d0d0d0;"></div>
<span class="t" style="left:1592.5px;top:603.1px;font-size:14.8px;color:#c8c8c8;transform:scaleX(1.0700);">0,4</span>
<div class="b" style="left:1127.6px;top:229.54999999999995px;width:6.4px;height:1.5px;background:#d0d0d0;"></div>
<span class="t" style="left:1104.6px;top:223.7px;font-size:14.8px;color:#c8c8c8;transform:scaleX(1.0700);">0,4</span>
<div class="b" style="left:1661.6350000000002px;top:593px;width:1.7px;height:5.6px;background:#d0d0d0;"></div>
<span class="t" style="left:1646.8px;top:603.1px;font-size:14.8px;color:#c8c8c8;transform:scaleX(1.0700);">0,45</span>
<div class="b" style="left:1127.6px;top:184.34999999999997px;width:6.4px;height:1.5px;background:#d0d0d0;"></div>
<span class="t" style="left:1095.8px;top:178.5px;font-size:14.8px;color:#c8c8c8;transform:scaleX(1.0700);">0,45</span>
<div class="b" style="left:1720.3000000000002px;top:593px;width:1.7px;height:5.6px;background:#d0d0d0;"></div>
<span class="t" style="left:1709.8px;top:603.1px;font-size:14.8px;color:#c8c8c8;transform:scaleX(1.0700);">0,5</span>
<div class="b" style="left:1127.6px;top:139.14999999999998px;width:6.4px;height:1.5px;background:#d0d0d0;"></div>
<span class="t" style="left:1104.6px;top:133.3px;font-size:14.8px;color:#c8c8c8;transform:scaleX(1.0700);">0,5</span>
<div class="b" style="left:1778.9650000000001px;top:593px;width:1.7px;height:5.6px;background:#d0d0d0;"></div>
<span class="t" style="left:1764.1px;top:603.1px;font-size:14.8px;color:#c8c8c8;transform:scaleX(1.0700);">0,55</span>
<div class="b" style="left:1127.6px;top:93.94999999999993px;width:6.4px;height:1.5px;background:#d0d0d0;"></div>
<span class="t" style="left:1095.8px;top:88.1px;font-size:14.8px;color:#c8c8c8;transform:scaleX(1.0700);">0,55</span>
<svg class="b" style="left:0;top:0" width="1867" height="640"><rect x="1273.0" y="74.0" width="14" height="15" fill="none" stroke="#fff" stroke-opacity=".85" stroke-width="1.9"/><rect x="1295.6" y="96.5" width="14" height="15" fill="none" stroke="#fff" stroke-opacity=".85" stroke-width="1.9"/><rect x="1342.4" y="88.9" width="14" height="15" fill="none" stroke="#fff" stroke-opacity=".85" stroke-width="1.9"/><rect x="1366.4" y="82.9" width="14" height="15" fill="none" stroke="#fff" stroke-opacity=".85" stroke-width="1.9"/><rect x="1399.6" y="87.4" width="14" height="15" fill="none" stroke="#fff" stroke-opacity=".85" stroke-width="1.9"/><rect x="1436.9" y="93.2" width="14" height="15" fill="none" stroke="#fff" stroke-opacity=".85" stroke-width="1.9"/><rect x="1339.6" y="111.5" width="14" height="15" fill="none" stroke="#fff" stroke-opacity=".85" stroke-width="1.9"/><rect x="1304.4" y="150.5" width="14" height="15" fill="none" stroke="#fff" stroke-opacity=".85" stroke-width="1.9"/><rect x="1289.5" y="171.6" width="14" height="15" fill="none" stroke="#fff" stroke-opacity=".85" stroke-width="1.9"/><rect x="1295.7" y="209.1" width="14" height="15" fill="none" stroke="#fff" stroke-opacity=".85" stroke-width="1.9"/><rect x="1330.6" y="207.5" width="14" height="15" fill="none" stroke="#fff" stroke-opacity=".85" stroke-width="1.9"/><rect x="1356.0" y="213.5" width="14" height="15" fill="none" stroke="#fff" stroke-opacity=".85" stroke-width="1.9"/><rect x="1476.0" y="199.9" width="14" height="15" fill="none" stroke="#fff" stroke-opacity=".85" stroke-width="1.9"/><rect x="1399.5" y="239.6" width="14" height="15" fill="none" stroke="#fff" stroke-opacity=".85" stroke-width="1.9"/><rect x="1334.9" y="275.5" width="14" height="15" fill="none" stroke="#fff" stroke-opacity=".85" stroke-width="1.9"/><rect x="1485.0" y="284.7" width="14" height="15" fill="none" stroke="#fff" stroke-opacity=".85" stroke-width="1.9"/><rect x="1335.0" y="337.5" width="14" height="15" fill="none" stroke="#fff" stroke-opacity=".85" stroke-width="1.9"/><rect x="1333.3" y="440.0" width="14" height="15" fill="none" stroke="#fff" stroke-opacity=".85" stroke-width="1.9"/><rect x="1656.3" y="110.0" width="14" height="15" fill="none" stroke="#fff" stroke-opacity=".85" stroke-width="1.9"/><rect x="1516.4" y="144.5" width="14" height="15" fill="none" stroke="#fff" stroke-opacity=".85" stroke-width="1.9"/><rect x="1590.4" y="126.5" width="14" height="15" fill="none" stroke="#fff" stroke-opacity=".85" stroke-width="1.9"/><rect x="1489.6" y="97.7" width="14" height="15" fill="none" stroke="#fff" stroke-opacity=".85" stroke-width="1.9"/><rect x="1497.0" y="99.3" width="14" height="15" fill="none" stroke="#fff" stroke-opacity=".85" stroke-width="1.9"/><rect x="1465.4" y="103.5" width="14" height="15" fill="none" stroke="#fff" stroke-opacity=".85" stroke-width="1.9"/><rect x="1451.8" y="106.8" width="14" height="15" fill="none" stroke="#fff" stroke-opacity=".85" stroke-width="1.9"/><rect x="1477.6" y="110.0" width="14" height="15" fill="none" stroke="#fff" stroke-opacity=".85" stroke-width="1.9"/><rect x="1431.0" y="114.5" width="14" height="15" fill="none" stroke="#fff" stroke-opacity=".85" stroke-width="1.9"/><rect x="1449.0" y="114.5" width="14" height="15" fill="none" stroke="#fff" stroke-opacity=".85" stroke-width="1.9"/><rect x="1459.5" y="120.3" width="14" height="15" fill="none" stroke="#fff" stroke-opacity=".85" stroke-width="1.9"/><rect x="1459.7" y="119.7" width="14" height="15" fill="none" stroke="#fff" stroke-opacity=".85" stroke-width="1.9"/><rect x="1423.0" y="122.5" width="14" height="15" fill="none" stroke="#fff" stroke-opacity=".85" stroke-width="1.9"/><rect x="1446.8" y="122.3" width="14" height="15" fill="none" stroke="#fff" stroke-opacity=".85" stroke-width="1.9"/><rect x="1433.0" y="123.5" width="14" height="15" fill="none" stroke="#fff" stroke-opacity=".85" stroke-width="1.9"/><rect x="1427.0" y="126.5" width="14" height="15" fill="none" stroke="#fff" stroke-opacity=".85" stroke-width="1.9"/><rect x="1423.5" y="121.0" width="14" height="15" fill="none" stroke="#fff" stroke-opacity=".85" stroke-width="1.9"/><rect x="1421.0" y="125.5" width="14" height="15" fill="none" stroke="#fff" stroke-opacity=".85" stroke-width="1.9"/><rect x="1404.8" y="124.2" width="14" height="15" fill="none" stroke="#fff" stroke-opacity=".85" stroke-width="1.9"/><rect x="1404.0" y="137.1" width="14" height="15" fill="none" stroke="#fff" stroke-opacity=".85" stroke-width="1.9"/><circle cx="1412.3" cy="146.8" r="4.8" fill="#f8b8a0" stroke="#111" stroke-width="1.1"/><circle cx="1414.0" cy="135.0" r="4.8" fill="#f8c0a0" stroke="#111" stroke-width="1.1"/><circle cx="1427.0" cy="138.0" r="4.8" fill="#a06848" stroke="#111" stroke-width="1.1"/><circle cx="1427.8" cy="135.0" r="4.8" fill="#d09870" stroke="#111" stroke-width="1.1"/><circle cx="1436.2" cy="136.2" r="4.8" fill="#d89070" stroke="#111" stroke-width="1.1"/><circle cx="1442.6" cy="132.6" r="4.8" fill="#d89070" stroke="#111" stroke-width="1.1"/><circle cx="1449.7" cy="133.9" r="4.8" fill="#d88868" stroke="#111" stroke-width="1.1"/><circle cx="1434.9" cy="130.8" r="4.8" fill="#d89870" stroke="#111" stroke-width="1.1"/><circle cx="1466.5" cy="130.8" r="4.8" fill="#f09878" stroke="#111" stroke-width="1.1"/><circle cx="1463.3" cy="125.9" r="4.8" fill="#d89070" stroke="#111" stroke-width="1.1"/><circle cx="1454.3" cy="125.2" r="4.8" fill="#d89070" stroke="#111" stroke-width="1.1"/><circle cx="1438.0" cy="124.6" r="4.8" fill="#d09870" stroke="#111" stroke-width="1.1"/><circle cx="1481.6" cy="118.8" r="4.8" fill="#80503a" stroke="#111" stroke-width="1.1"/><circle cx="1455.8" cy="115.8" r="4.8" fill="#9a6848" stroke="#111" stroke-width="1.1"/><circle cx="1468.2" cy="113.0" r="4.8" fill="#7a5038" stroke="#111" stroke-width="1.1"/><circle cx="1499.5" cy="108.0" r="4.8" fill="#b87838" stroke="#111" stroke-width="1.1"/><circle cx="1496.0" cy="106.5" r="4.8" fill="#b07030" stroke="#111" stroke-width="1.1"/><circle cx="1600.5" cy="138.4" r="4.8" fill="#b84050" stroke="#111" stroke-width="1.1"/><circle cx="1520.4" cy="155.0" r="4.8" fill="#c06070" stroke="#111" stroke-width="1.1"/><circle cx="1688.0" cy="117.5" r="4.8" fill="#ff0000" stroke="#111" stroke-width="1.1"/><circle cx="1354.0" cy="461.0" r="4.8" fill="#0000ff" stroke="#111" stroke-width="1.1"/><circle cx="1348.0" cy="348.5" r="4.8" fill="#303890" stroke="#111" stroke-width="1.1"/><circle cx="1498.2" cy="302.4" r="4.8" fill="#ff00ff" stroke="#111" stroke-width="1.1"/><circle cx="1346.3" cy="284.2" r="4.8" fill="#5060a8" stroke="#111" stroke-width="1.1"/><circle cx="1410.9" cy="253.0" r="4.8" fill="#604870" stroke="#111" stroke-width="1.1"/><circle cx="1481.4" cy="211.8" r="4.8" fill="#c06098" stroke="#111" stroke-width="1.1"/><circle cx="1367.5" cy="223.8" r="4.8" fill="#8888b8" stroke="#111" stroke-width="1.1"/><circle cx="1342.0" cy="219.2" r="4.8" fill="#6080a8" stroke="#111" stroke-width="1.1"/><circle cx="1304.0" cy="222.4" r="4.8" fill="#108898" stroke="#111" stroke-width="1.1"/><circle cx="1297.9" cy="181.8" r="4.8" fill="#00ffff" stroke="#111" stroke-width="1.1"/><circle cx="1314.5" cy="162.4" r="4.8" fill="#80b0a0" stroke="#111" stroke-width="1.1"/><circle cx="1349.4" cy="121.8" r="4.8" fill="#5a6a3c" stroke="#111" stroke-width="1.1"/><circle cx="1443.9" cy="100.7" r="4.8" fill="#e0a030" stroke="#111" stroke-width="1.1"/><circle cx="1407.7" cy="95.1" r="4.8" fill="#e8c830" stroke="#111" stroke-width="1.1"/><circle cx="1374.7" cy="90.4" r="4.8" fill="#ffff00" stroke="#111" stroke-width="1.1"/><circle cx="1351.0" cy="97.7" r="4.8" fill="#b0c060" stroke="#111" stroke-width="1.1"/><circle cx="1304.0" cy="106.8" r="4.8" fill="#5a9a50" stroke="#111" stroke-width="1.1"/><circle cx="1278.7" cy="80.2" r="4.8" fill="#00ff00" stroke="#111" stroke-width="1.1"/><circle cx="1372" cy="169.8" r="5" fill="#e0e0e0" stroke="#111" stroke-width="1.2"/><rect x="1359" y="159.5" width="14" height="14" fill="none" stroke="#000" stroke-width="2.4"/><circle cx="1369.2" cy="169.8" r="5" fill="#a0a0a0" stroke="#111" stroke-width="1.2"/></svg>
<div class="b" style="left:1614px;top:400px;width:220px;height:146px;background:#8a8a8a;"></div>
<div class="b" style="left:1616px;top:402px;width:216px;height:142px;background:#fff;overflow:hidden;isolation:isolate">
<div class="ly mu" style="background:conic-gradient(from 226.31deg at -580.3px 826.3px,#00ffff 156.40deg,#08ffff 157.38deg,#11ffff 158.37deg,#1affff 159.35deg,#23ffff 160.33deg,#2dffff 161.32deg,#37ffff 162.30deg,#41ffff 163.28deg,#4cffff 164.27deg,#57ffff 165.25deg,#63ffff 166.23deg,#6fffff 167.22deg,#7cffff 168.20deg,#89ffff 169.18deg,#98ffff 170.17deg,#a7ffff 171.15deg,#b6ffff 172.13deg,#c7ffff 173.12deg,#d9ffff 174.10deg,#ecffff 175.08deg,#fffeff 176.07deg,#ffebff 177.05deg,#ffd9ff 178.03deg,#ffc8ff 179.02deg,#ffb9ff 180.00deg,#ffabff 180.98deg,#ff9eff 181.97deg,#ff92ff 182.95deg,#ff87ff 183.93deg,#ff7cff 184.92deg,#ff72ff 185.90deg,#ff69ff 186.88deg,#ff60ff 187.87deg,#ff58ff 188.85deg,#ff50ff 189.83deg,#ff48ff 190.82deg,#ff41ff 191.80deg,#ff3bff 192.78deg,#ff34ff 193.77deg,#ff2eff 194.75deg,#ff28ff 195.73deg,#ff22ff 196.72deg,#ff1dff 197.70deg,#ff18ff 198.68deg,#ff13ff 199.67deg,#ff0eff 200.65deg,#ff09ff 201.63deg,#ff04ff 202.62deg,#ff00ff 203.60deg);clip-path:polygon(108.1px 70.9px,142.9px 561.8px,1492.7px 68.2px,54.3px -689.9px,-264.5px 71.7px)"></div><div class="ly mu" style="background:conic-gradient(from 340.25deg at 54.3px -689.9px,#ffff00 137.54deg,#ffff04 139.31deg,#ffff08 141.08deg,#ffff0d 142.85deg,#ffff11 144.62deg,#ffff15 146.38deg,#ffff1a 148.15deg,#ffff1e 149.92deg,#ffff23 151.69deg,#ffff28 153.46deg,#ffff2d 155.23deg,#ffff31 157.00deg,#ffff37 158.77deg,#ffff3c 160.54deg,#ffff41 162.31deg,#ffff47 164.08deg,#ffff4d 165.85deg,#ffff53 167.62deg,#ffff59 169.38deg,#ffff60 171.15deg,#ffff67 172.92deg,#ffff6e 174.69deg,#ffff76 176.46deg,#ffff7e 178.23deg,#ffff87 180.00deg,#ffff91 181.77deg,#ffff9b 183.54deg,#ffffa6 185.31deg,#ffffb2 187.08deg,#ffffbf 188.85deg,#ffffcd 190.62deg,#ffffdc 192.38deg,#ffffee 194.15deg,#fcffff 195.92deg,#e8ffff 197.69deg,#d5ffff 199.46deg,#c2ffff 201.23deg,#b0ffff 203.00deg,#9fffff 204.77deg,#8dffff 206.54deg,#7dffff 208.31deg,#6cffff 210.08deg,#5cffff 211.85deg,#4cffff 213.62deg,#3dffff 215.38deg,#2dffff 217.15deg,#1effff 218.92deg,#0fffff 220.69deg,#00ffff 222.46deg);clip-path:polygon(108.1px 70.9px,559.1px -423.8px,1492.7px 68.2px,-580.3px 826.3px,-264.5px 71.7px)"></div><div class="ly mu" style="background:conic-gradient(from 93.85deg at 1492.7px 68.2px,#ff00ff 156.06deg,#ff08ff 157.06deg,#ff11ff 158.06deg,#ff1aff 159.05deg,#ff23ff 160.05deg,#ff2dff 161.05deg,#ff37ff 162.05deg,#ff41ff 163.04deg,#ff4cff 164.04deg,#ff57ff 165.04deg,#ff63ff 166.04deg,#ff6fff 167.03deg,#ff7cff 168.03deg,#ff89ff 169.03deg,#ff97ff 170.03deg,#ffa6ff 171.02deg,#ffb6ff 172.02deg,#ffc6ff 173.02deg,#ffd8ff 174.02deg,#ffebff 175.01deg,#fffeff 176.01deg,#ffffec 177.01deg,#ffffda 178.01deg,#ffffc9 179.00deg,#ffffba 180.00deg,#ffffac 181.00deg,#ffff9f 181.99deg,#ffff93 182.99deg,#ffff88 183.99deg,#ffff7d 184.99deg,#ffff73 185.98deg,#ffff6a 186.98deg,#ffff61 187.98deg,#ffff58 188.98deg,#ffff51 189.97deg,#ffff49 190.97deg,#ffff42 191.97deg,#ffff3b 192.97deg,#ffff34 193.96deg,#ffff2e 194.96deg,#ffff28 195.96deg,#ffff23 196.96deg,#ffff1d 197.95deg,#ffff18 198.95deg,#ffff13 199.95deg,#ffff0e 200.95deg,#ffff09 201.94deg,#ffff04 202.94deg,#ffff00 203.94deg);clip-path:polygon(108.1px 70.9px,559.1px -423.8px,54.3px -689.9px,-580.3px 826.3px,142.9px 561.8px)"></div>
</div>
<svg class="b" style="left:1614px;top:400px" width="220" height="146"><circle cx="113.4" cy="89.6" r="5" fill="#ececec" stroke="#111" stroke-width="1.2"/><circle cx="108.8" cy="86.8" r="5" fill="#c4c4c4" stroke="#111" stroke-width="1.2"/><circle cx="111" cy="89" r="5" fill="#b0b0b0" stroke="#111" stroke-width="1.2"/><circle cx="104.6" cy="92.4" r="5" fill="#909090" stroke="#111" stroke-width="1.2"/><rect x="102.2" y="66.3" width="14.8" height="13.2" fill="#fff" stroke="#000" stroke-width="2"/></svg>
<div class="b" style="left:1558px;top:556px;width:280px;height:31px;background:#333;"></div>
<span class="t" style="left:1560.3px;top:562.0px;font-size:20.6px;color:#f4f4f4;transform:scaleX(0.8655);">RGB</span>
<span class="t" style="left:1607.2px;top:562.0px;font-size:20.6px;color:#f4f4f4;transform:scaleX(1.0946);">Triplet:</span>
<span class="t" style="left:1683.1px;top:562.0px;font-size:20.6px;color:#f4f4f4;transform:scaleX(1.0358);">235,</span>
<span class="t" style="left:1732.6px;top:562.0px;font-size:20.6px;color:#f4f4f4;transform:scaleX(1.0358);">235,</span>
<span class="t" style="left:1781.6px;top:562.0px;font-size:20.6px;color:#f4f4f4;transform:scaleX(1.0261);">235</span>
<span class="t" style="left:65.4px;top:640.0px;font-size:31.5px;color:#f2f2f2;transform:scaleX(0.9868);-webkit-text-stroke:.3px #f2f2f2;">Avg</span>
<span class="t" style="left:129.5px;top:640.0px;font-size:31.5px;color:#f2f2f2;transform:scaleX(1.0218);-webkit-text-stroke:.3px #f2f2f2;">dE2000:</span>
<span class="t" style="left:260.5px;top:640.0px;font-size:31.5px;color:#f2f2f2;transform:scaleX(1.0054);-webkit-text-stroke:.3px #f2f2f2;">1,72</span>
<span class="t" style="left:70.1px;top:685.5px;font-size:31.5px;color:#f2f2f2;transform:scaleX(1.0397);-webkit-text-stroke:.3px #f2f2f2;">Max</span>
<span class="t" style="left:143.7px;top:685.5px;font-size:31.5px;color:#f2f2f2;transform:scaleX(1.0227);-webkit-text-stroke:.3px #f2f2f2;">dE2000:</span>
<span class="t" style="left:274.1px;top:685.5px;font-size:31.5px;color:#f2f2f2;transform:scaleX(1.0095);-webkit-text-stroke:.3px #f2f2f2;">5,2</span>
<span class="t" style="left:26.8px;top:736.9px;font-size:30.5px;color:#f2f2f2;transform:scaleX(1.0873);-webkit-text-stroke:.3px #f2f2f2;">Current</span>
<span class="t" style="left:149.0px;top:736.9px;font-size:30.5px;color:#f2f2f2;transform:scaleX(1.0457);-webkit-text-stroke:.3px #f2f2f2;">Reading</span>
<span class="t" style="left:25.9px;top:780.1px;font-size:27px;color:#f2f2f2;transform:scaleX(0.9877);-webkit-text-stroke:.3px #f2f2f2;">x:</span>
<span class="t" style="left:54.3px;top:780.1px;font-size:27px;color:#f2f2f2;transform:scaleX(1.0240);-webkit-text-stroke:.3px #f2f2f2;">0,3138</span>
<span class="t" style="left:199.6px;top:780.1px;font-size:27px;color:#f2f2f2;transform:scaleX(0.9734);-webkit-text-stroke:.3px #f2f2f2;">y:</span>
<span class="t" style="left:227.3px;top:780.1px;font-size:27px;color:#f2f2f2;transform:scaleX(1.0187);-webkit-text-stroke:.3px #f2f2f2;">0,323</span>
<span class="t" style="left:25.9px;top:826.1px;font-size:27px;color:#f2f2f2;transform:scaleX(0.9810);-webkit-text-stroke:.3px #f2f2f2;">fL:</span>
<span class="t" style="left:63.2px;top:826.1px;font-size:27px;color:#f2f2f2;transform:scaleX(1.0207);-webkit-text-stroke:.3px #f2f2f2;">48,5</span>
<span class="t" style="left:25.9px;top:862.3px;font-size:27px;color:#f2f2f2;transform:scaleX(1.1058);-webkit-text-stroke:.3px #f2f2f2;">cd/m²:</span>
<span class="t" style="left:118.4px;top:862.3px;font-size:27px;color:#f2f2f2;transform:scaleX(1.0131);-webkit-text-stroke:.3px #f2f2f2;">166,16</span>
<div class="b" style="left:364px;top:646px;width:1488px;height:252px;background:#1e1e1e;"></div>
<div class="b" style="left:366px;top:648px;width:1484px;height:249px;background:#606060;overflow:hidden">
<div class="b" style="left:0px;top:0px;width:1485px;height:27.3px;background:linear-gradient(180deg,#3c3c3c 0,#333 48%,#161616 52%,#111 100%);"></div>
<span class="t" style="left:199.7px;top:6.3px;font-size:15.2px;color:#f4f4f4;font-family:'DejaVu Sans','Liberation Sans',sans-serif;transform:scaleX(1.1801);">White</span>
<span class="t" style="left:289.3px;top:6.3px;font-size:15.2px;color:#f4f4f4;font-family:'DejaVu Sans','Liberation Sans',sans-serif;transform:scaleX(1.1092);">Gray 80</span>
<span class="t" style="left:386.9px;top:6.3px;font-size:15.2px;color:#f4f4f4;font-family:'DejaVu Sans','Liberation Sans',sans-serif;transform:scaleX(1.0959);">Gray 65</span>
<span class="t" style="left:478.1px;top:6.3px;font-size:15.2px;color:#f4f4f4;font-family:'DejaVu Sans','Liberation Sans',sans-serif;transform:scaleX(1.1092);">Gray 50</span>
<span class="t" style="left:563.7px;top:6.3px;font-size:15.2px;color:#f4f4f4;font-family:'DejaVu Sans','Liberation Sans',sans-serif;transform:scaleX(1.0959);">Gray 35</span>
<span class="t" style="left:645.7px;top:6.3px;font-size:15.2px;color:#f4f4f4;font-family:'DejaVu Sans','Liberation Sans',sans-serif;transform:scaleX(1.1026);">Dark Skin</span>
<span class="t" style="left:738.6px;top:6.3px;font-size:15.2px;color:#f4f4f4;font-family:'DejaVu Sans','Liberation Sans',sans-serif;transform:scaleX(1.0974);">Light Skin</span>
<span class="t" style="left:834.3px;top:6.3px;font-size:15.2px;color:#f4f4f4;font-family:'DejaVu Sans','Liberation Sans',sans-serif;transform:scaleX(1.1016);">Blue Sky</span>
<span class="t" style="left:925.0px;top:6.3px;font-size:15.2px;color:#f4f4f4;font-family:'DejaVu Sans','Liberation Sans',sans-serif;transform:scaleX(1.1278);">Foliage</span>
<span class="t" style="left:1004.0px;top:6.3px;font-size:15.2px;color:#f4f4f4;font-family:'DejaVu Sans','Liberation Sans',sans-serif;transform:scaleX(1.1481);">Blue Flower</span>
<span class="t" style="left:1118.5px;top:6.3px;font-size:15.2px;color:#f4f4f4;font-family:'DejaVu Sans','Liberation Sans',sans-serif;transform:scaleX(1.1424);">Bluish Green</span>
<span class="t" style="left:1246.3px;top:6.3px;font-size:15.2px;color:#f4f4f4;font-family:'DejaVu Sans','Liberation Sans',sans-serif;transform:scaleX(1.1253);">Orange</span>
<span class="t" style="left:1326.6px;top:6.3px;font-size:15.2px;color:#f4f4f4;font-family:'DejaVu Sans','Liberation Sans',sans-serif;transform:scaleX(1.1530);">Purplish Blue</span>
<span class="t" style="left:1452.3px;top:6.3px;font-size:15.2px;color:#f4f4f4;font-family:'DejaVu Sans','Liberation Sans',sans-serif;transform:scaleX(1.1525);">Moderate Red</span>
<div class="b" style="left:0px;top:27.3px;width:1485px;height:26.02px;background:#404040;"></div>
<span class="t" style="left:15.6px;top:34.1px;font-size:15.2px;color:#f8f8f8;font-family:'DejaVu Sans','Liberation Sans',sans-serif;font-weight:700;transform:scaleX(1.1360);">x: CIE31</span>
<span class="t" style="left:182.8px;top:34.1px;font-size:15.2px;color:#ececec;font-family:'DejaVu Sans','Liberation Sans',sans-serif;transform:scaleX(1.1711);">0,3138</span>
<span class="t" style="left:280.0px;top:34.1px;font-size:15.2px;color:#ececec;font-family:'DejaVu Sans','Liberation Sans',sans-serif;transform:scaleX(1.1711);">0,3127</span>
<span class="t" style="left:376.9px;top:34.1px;font-size:15.2px;color:#ececec;font-family:'DejaVu Sans','Liberation Sans',sans-serif;transform:scaleX(1.1711);">0,3125</span>
<span class="t" style="left:474.5px;top:34.1px;font-size:15.2px;color:#ececec;font-family:'DejaVu Sans','Liberation Sans',sans-serif;transform:scaleX(1.1711);">0,3127</span>
<span class="t" style="left:559.7px;top:34.1px;font-size:15.2px;color:#ececec;font-family:'DejaVu Sans','Liberation Sans',sans-serif;transform:scaleX(1.1711);">0,3118</span>
<span class="t" style="left:645.7px;top:34.1px;font-size:15.2px;color:#ececec;font-family:'DejaVu Sans','Liberation Sans',sans-serif;transform:scaleX(1.1711);">0,4084</span>
<span class="t" style="left:738.6px;top:34.1px;font-size:15.2px;color:#ececec;font-family:'DejaVu Sans','Liberation Sans',sans-serif;transform:scaleX(1.1711);">0,3817</span>
<span class="t" style="left:833.0px;top:34.1px;font-size:15.2px;color:#ececec;font-family:'DejaVu Sans','Liberation Sans',sans-serif;transform:scaleX(1.1711);">0,2449</span>
<span class="t" style="left:918.8px;top:34.1px;font-size:15.2px;color:#ececec;font-family:'DejaVu Sans','Liberation Sans',sans-serif;transform:scaleX(1.1711);">0,3428</span>
<span class="t" style="left:1004.0px;top:34.1px;font-size:15.2px;color:#ececec;font-family:'DejaVu Sans','Liberation Sans',sans-serif;transform:scaleX(1.1711);">0,2656</span>
<span class="t" style="left:1118.5px;top:34.1px;font-size:15.2px;color:#ececec;font-family:'DejaVu Sans','Liberation Sans',sans-serif;transform:scaleX(1.1711);">0,2599</span>
<span class="t" style="left:1240.9px;top:34.1px;font-size:15.2px;color:#ececec;font-family:'DejaVu Sans','Liberation Sans',sans-serif;transform:scaleX(1.1711);">0,5239</span>
<span class="t" style="left:1326.6px;top:34.1px;font-size:15.2px;color:#ececec;font-family:'DejaVu Sans','Liberation Sans',sans-serif;transform:scaleX(1.1711);">0,2123</span>
<span class="t" style="left:1452.3px;top:34.1px;font-size:15.2px;color:#ececec;font-family:'DejaVu Sans','Liberation Sans',sans-serif;transform:scaleX(1.1711);">0,4722</span>
<div class="b" style="left:0px;top:53.0px;width:1485px;height:26.02px;background:#808080;"></div>
<span class="t" style="left:15.6px;top:59.9px;font-size:15.2px;color:#f8f8f8;font-family:'DejaVu Sans','Liberation Sans',sans-serif;font-weight:700;transform:scaleX(1.1348);">y: CIE31</span>
<span class="t" style="left:182.8px;top:59.9px;font-size:15.2px;color:#ececec;font-family:'DejaVu Sans','Liberation Sans',sans-serif;transform:scaleX(1.1711);">0,3230</span>
<span class="t" style="left:280.0px;top:59.9px;font-size:15.2px;color:#ececec;font-family:'DejaVu Sans','Liberation Sans',sans-serif;transform:scaleX(1.1711);">0,3239</span>
<span class="t" style="left:376.9px;top:59.9px;font-size:15.2px;color:#ececec;font-family:'DejaVu Sans','Liberation Sans',sans-serif;transform:scaleX(1.1711);">0,3241</span>
<span class="t" style="left:474.5px;top:59.9px;font-size:15.2px;color:#ececec;font-family:'DejaVu Sans','Liberation Sans',sans-serif;transform:scaleX(1.1711);">0,3231</span>
<span class="t" style="left:559.7px;top:59.9px;font-size:15.2px;color:#ececec;font-family:'DejaVu Sans','Liberation Sans',sans-serif;transform:scaleX(1.1711);">0,3223</span>
<span class="t" style="left:645.7px;top:59.9px;font-size:15.2px;color:#ececec;font-family:'DejaVu Sans','Liberation Sans',sans-serif;transform:scaleX(1.1711);">0,3632</span>
<span class="t" style="left:738.6px;top:59.9px;font-size:15.2px;color:#ececec;font-family:'DejaVu Sans','Liberation Sans',sans-serif;transform:scaleX(1.1711);">0,3513</span>
<span class="t" style="left:833.0px;top:59.9px;font-size:15.2px;color:#ececec;font-family:'DejaVu Sans','Liberation Sans',sans-serif;transform:scaleX(1.1711);">0,2523</span>
<span class="t" style="left:918.8px;top:59.9px;font-size:15.2px;color:#ececec;font-family:'DejaVu Sans','Liberation Sans',sans-serif;transform:scaleX(1.1711);">0,4315</span>
<span class="t" style="left:1004.0px;top:59.9px;font-size:15.2px;color:#ececec;font-family:'DejaVu Sans','Liberation Sans',sans-serif;transform:scaleX(1.1711);">0,2410</span>
<span class="t" style="left:1118.5px;top:59.9px;font-size:15.2px;color:#ececec;font-family:'DejaVu Sans','Liberation Sans',sans-serif;transform:scaleX(1.1711);">0,3541</span>
<span class="t" style="left:1240.9px;top:59.9px;font-size:15.2px;color:#ececec;font-family:'DejaVu Sans','Liberation Sans',sans-serif;transform:scaleX(1.1711);">0,4041</span>
<span class="t" style="left:1326.6px;top:59.9px;font-size:15.2px;color:#ececec;font-family:'DejaVu Sans','Liberation Sans',sans-serif;transform:scaleX(1.1711);">0,1766</span>
<span class="t" style="left:1452.3px;top:59.9px;font-size:15.2px;color:#ececec;font-family:'DejaVu Sans','Liberation Sans',sans-serif;transform:scaleX(1.1711);">0,3068</span>
<div class="b" style="left:0px;top:78.7px;width:1485px;height:26.02px;background:#404040;"></div>
<span class="t" style="left:15.8px;top:85.6px;font-size:15.2px;color:#f8f8f8;font-family:'DejaVu Sans','Liberation Sans',sans-serif;font-weight:700;transform:scaleX(1.0155);">Y</span>
<span class="t" style="left:182.8px;top:85.6px;font-size:15.2px;color:#ececec;font-family:'DejaVu Sans','Liberation Sans',sans-serif;transform:scaleX(1.1717);">166,1649</span>
<span class="t" style="left:280.0px;top:85.6px;font-size:15.2px;color:#ececec;font-family:'DejaVu Sans','Liberation Sans',sans-serif;transform:scaleX(1.1717);">130,9382</span>
<span class="t" style="left:376.9px;top:85.6px;font-size:15.2px;color:#ececec;font-family:'DejaVu Sans','Liberation Sans',sans-serif;transform:scaleX(1.1717);">105,2914</span>
<span class="t" style="left:474.5px;top:85.6px;font-size:15.2px;color:#ececec;font-family:'DejaVu Sans','Liberation Sans',sans-serif;transform:scaleX(1.1715);">79,8244</span>
<span class="t" style="left:559.7px;top:85.6px;font-size:15.2px;color:#ececec;font-family:'DejaVu Sans','Liberation Sans',sans-serif;transform:scaleX(1.1715);">53,8855</span>
<span class="t" style="left:645.7px;top:85.6px;font-size:15.2px;color:#ececec;font-family:'DejaVu Sans','Liberation Sans',sans-serif;transform:scaleX(1.1715);">13,8568</span>
<span class="t" style="left:738.6px;top:85.6px;font-size:15.2px;color:#ececec;font-family:'DejaVu Sans','Liberation Sans',sans-serif;transform:scaleX(1.1715);">55,6735</span>
<span class="t" style="left:833.0px;top:85.6px;font-size:15.2px;color:#ececec;font-family:'DejaVu Sans','Liberation Sans',sans-serif;transform:scaleX(1.1715);">27,9256</span>
<span class="t" style="left:918.8px;top:85.6px;font-size:15.2px;color:#ececec;font-family:'DejaVu Sans','Liberation Sans',sans-serif;transform:scaleX(1.1715);">18,5682</span>
<span class="t" style="left:1004.0px;top:85.6px;font-size:15.2px;color:#ececec;font-family:'DejaVu Sans','Liberation Sans',sans-serif;transform:scaleX(1.1715);">35,0483</span>
<span class="t" style="left:1118.5px;top:85.6px;font-size:15.2px;color:#ececec;font-family:'DejaVu Sans','Liberation Sans',sans-serif;transform:scaleX(1.1715);">67,4125</span>
<span class="t" style="left:1240.9px;top:85.6px;font-size:15.2px;color:#ececec;font-family:'DejaVu Sans','Liberation Sans',sans-serif;transform:scaleX(1.1715);">43,4603</span>
<span class="t" style="left:1326.6px;top:85.6px;font-size:15.2px;color:#ececec;font-family:'DejaVu Sans','Liberation Sans',sans-serif;transform:scaleX(1.1715);">16,9274</span>
<span class="t" style="left:1452.3px;top:85.6px;font-size:15.2px;color:#ececec;font-family:'DejaVu Sans','Liberation Sans',sans-serif;transform:scaleX(1.1715);">27,5012</span>
<div class="b" style="left:0px;top:104.5px;width:1485px;height:26.02px;background:#808080;"></div>
<span class="t" style="left:15.6px;top:111.3px;font-size:15.2px;color:#f8f8f8;font-family:'DejaVu Sans','Liberation Sans',sans-serif;font-weight:700;transform:scaleX(1.1361);">Target x:CIE31</span>
<span class="t" style="left:182.8px;top:111.3px;font-size:15.2px;color:#ececec;font-family:'DejaVu Sans','Liberation Sans',sans-serif;transform:scaleX(1.1711);">0,3127</span>
<span class="t" style="left:280.0px;top:111.3px;font-size:15.2px;color:#ececec;font-family:'DejaVu Sans','Liberation Sans',sans-serif;transform:scaleX(1.1711);">0,3127</span>
<span class="t" style="left:376.9px;top:111.3px;font-size:15.2px;color:#ececec;font-family:'DejaVu Sans','Liberation Sans',sans-serif;transform:scaleX(1.1711);">0,3127</span>
<span class="t" style="left:474.5px;top:111.3px;font-size:15.2px;color:#ececec;font-family:'DejaVu Sans','Liberation Sans',sans-serif;transform:scaleX(1.1711);">0,3127</span>
<span class="t" style="left:559.7px;top:111.3px;font-size:15.2px;color:#ececec;font-family:'DejaVu Sans','Liberation Sans',sans-serif;transform:scaleX(1.1711);">0,3127</span>
<span class="t" style="left:645.7px;top:111.3px;font-size:15.2px;color:#ececec;font-family:'DejaVu Sans','Liberation Sans',sans-serif;transform:scaleX(1.1711);">0,4154</span>
<span class="t" style="left:738.6px;top:111.3px;font-size:15.2px;color:#ececec;font-family:'DejaVu Sans','Liberation Sans',sans-serif;transform:scaleX(1.1711);">0,3845</span>
<span class="t" style="left:833.0px;top:111.3px;font-size:15.2px;color:#ececec;font-family:'DejaVu Sans','Liberation Sans',sans-serif;transform:scaleX(1.1711);">0,2442</span>
<span class="t" style="left:918.8px;top:111.3px;font-size:15.2px;color:#ececec;font-family:'DejaVu Sans','Liberation Sans',sans-serif;transform:scaleX(1.1711);">0,3430</span>
<span class="t" style="left:1004.0px;top:111.3px;font-size:15.2px;color:#ececec;font-family:'DejaVu Sans','Liberation Sans',sans-serif;transform:scaleX(1.1711);">0,2646</span>
<span class="t" style="left:1118.5px;top:111.3px;font-size:15.2px;color:#ececec;font-family:'DejaVu Sans','Liberation Sans',sans-serif;transform:scaleX(1.1711);">0,2593</span>
<span class="t" style="left:1240.9px;top:111.3px;font-size:15.2px;color:#ececec;font-family:'DejaVu Sans','Liberation Sans',sans-serif;transform:scaleX(1.1711);">0,5260</span>
<span class="t" style="left:1326.6px;top:111.3px;font-size:15.2px;color:#ececec;font-family:'DejaVu Sans','Liberation Sans',sans-serif;transform:scaleX(1.1711);">0,2083</span>
<span class="t" style="left:1452.3px;top:111.3px;font-size:15.2px;color:#ececec;font-family:'DejaVu Sans','Liberation Sans',sans-serif;transform:scaleX(1.1711);">0,4721</span>
<div class="b" style="left:0px;top:130.2px;width:1485px;height:26.02px;background:#404040;"></div>
<span class="t" style="left:15.6px;top:137.0px;font-size:15.2px;color:#f8f8f8;font-family:'DejaVu Sans','Liberation Sans',sans-serif;font-weight:700;transform:scaleX(1.1347);">Target y:CIE31</span>
<span class="t" style="left:182.8px;top:137.0px;font-size:15.2px;color:#ececec;font-family:'DejaVu Sans','Liberation Sans',sans-serif;transform:scaleX(1.1711);">0,3290</span>
<span class="t" style="left:280.0px;top:137.0px;font-size:15.2px;color:#ececec;font-family:'DejaVu Sans','Liberation Sans',sans-serif;transform:scaleX(1.1711);">0,3290</span>
<span class="t" style="left:376.9px;top:137.0px;font-size:15.2px;color:#ececec;font-family:'DejaVu Sans','Liberation Sans',sans-serif;transform:scaleX(1.1711);">0,3290</span>
<span class="t" style="left:474.5px;top:137.0px;font-size:15.2px;color:#ececec;font-family:'DejaVu Sans','Liberation Sans',sans-serif;transform:scaleX(1.1711);">0,3290</span>
<span class="t" style="left:559.7px;top:137.0px;font-size:15.2px;color:#ececec;font-family:'DejaVu Sans','Liberation Sans',sans-serif;transform:scaleX(1.1711);">0,3290</span>
<span class="t" style="left:645.7px;top:137.0px;font-size:15.2px;color:#ececec;font-family:'DejaVu Sans','Liberation Sans',sans-serif;transform:scaleX(1.1711);">0,3662</span>
<span class="t" style="left:738.6px;top:137.0px;font-size:15.2px;color:#ececec;font-family:'DejaVu Sans','Liberation Sans',sans-serif;transform:scaleX(1.1711);">0,3580</span>
<span class="t" style="left:833.0px;top:137.0px;font-size:15.2px;color:#ececec;font-family:'DejaVu Sans','Liberation Sans',sans-serif;transform:scaleX(1.1711);">0,2593</span>
<span class="t" style="left:918.8px;top:137.0px;font-size:15.2px;color:#ececec;font-family:'DejaVu Sans','Liberation Sans',sans-serif;transform:scaleX(1.1711);">0,4398</span>
<span class="t" style="left:1004.0px;top:137.0px;font-size:15.2px;color:#ececec;font-family:'DejaVu Sans','Liberation Sans',sans-serif;transform:scaleX(1.1711);">0,2460</span>
<span class="t" style="left:1118.5px;top:137.0px;font-size:15.2px;color:#ececec;font-family:'DejaVu Sans','Liberation Sans',sans-serif;transform:scaleX(1.1711);">0,3624</span>
<span class="t" style="left:1240.9px;top:137.0px;font-size:15.2px;color:#ececec;font-family:'DejaVu Sans','Liberation Sans',sans-serif;transform:scaleX(1.1711);">0,4054</span>
<span class="t" style="left:1326.6px;top:137.0px;font-size:15.2px;color:#ececec;font-family:'DejaVu Sans','Liberation Sans',sans-serif;transform:scaleX(1.1711);">0,1782</span>
<span class="t" style="left:1452.3px;top:137.0px;font-size:15.2px;color:#ececec;font-family:'DejaVu Sans','Liberation Sans',sans-serif;transform:scaleX(1.1711);">0,3120</span>
<div class="b" style="left:0px;top:155.9px;width:1485px;height:26.02px;background:#808080;"></div>
<span class="t" style="left:15.6px;top:162.7px;font-size:15.2px;color:#f8f8f8;font-family:'DejaVu Sans','Liberation Sans',sans-serif;font-weight:700;transform:scaleX(1.1680);">Target Y</span>
<span class="t" style="left:182.8px;top:162.7px;font-size:15.2px;color:#ececec;font-family:'DejaVu Sans','Liberation Sans',sans-serif;transform:scaleX(1.1717);">166,1649</span>
<span class="t" style="left:280.0px;top:162.7px;font-size:15.2px;color:#ececec;font-family:'DejaVu Sans','Liberation Sans',sans-serif;transform:scaleX(1.1717);">128,8821</span>
<span class="t" style="left:376.9px;top:162.7px;font-size:15.2px;color:#ececec;font-family:'DejaVu Sans','Liberation Sans',sans-serif;transform:scaleX(1.1717);">103,7834</span>
<span class="t" style="left:474.5px;top:162.7px;font-size:15.2px;color:#ececec;font-family:'DejaVu Sans','Liberation Sans',sans-serif;transform:scaleX(1.1715);">78,2281</span>
<span class="t" style="left:559.7px;top:162.7px;font-size:15.2px;color:#ececec;font-family:'DejaVu Sans','Liberation Sans',sans-serif;transform:scaleX(1.1715);">52,9625</span>
<span class="t" style="left:645.7px;top:162.7px;font-size:15.2px;color:#ececec;font-family:'DejaVu Sans','Liberation Sans',sans-serif;transform:scaleX(1.1715);">13,4240</span>
<span class="t" style="left:738.6px;top:162.7px;font-size:15.2px;color:#ececec;font-family:'DejaVu Sans','Liberation Sans',sans-serif;transform:scaleX(1.1715);">53,9366</span>
<span class="t" style="left:833.0px;top:162.7px;font-size:15.2px;color:#ececec;font-family:'DejaVu Sans','Liberation Sans',sans-serif;transform:scaleX(1.1715);">27,2948</span>
<span class="t" style="left:918.8px;top:162.7px;font-size:15.2px;color:#ececec;font-family:'DejaVu Sans','Liberation Sans',sans-serif;transform:scaleX(1.1715);">18,1741</span>
<span class="t" style="left:1004.0px;top:162.7px;font-size:15.2px;color:#ececec;font-family:'DejaVu Sans','Liberation Sans',sans-serif;transform:scaleX(1.1715);">34,7447</span>
<span class="t" style="left:1118.5px;top:162.7px;font-size:15.2px;color:#ececec;font-family:'DejaVu Sans','Liberation Sans',sans-serif;transform:scaleX(1.1715);">65,7428</span>
<span class="t" style="left:1240.9px;top:162.7px;font-size:15.2px;color:#ececec;font-family:'DejaVu Sans','Liberation Sans',sans-serif;transform:scaleX(1.1715);">43,4639</span>
<span class="t" style="left:1326.6px;top:162.7px;font-size:15.2px;color:#ececec;font-family:'DejaVu Sans','Liberation Sans',sans-serif;transform:scaleX(1.1715);">16,2281</span>
<span class="t" style="left:1452.3px;top:162.7px;font-size:15.2px;color:#ececec;font-family:'DejaVu Sans','Liberation Sans',sans-serif;transform:scaleX(1.1715);">27,5231</span>
<div class="b" style="left:0px;top:181.6px;width:1485px;height:26.02px;background:#404040;"></div>
<span class="t" style="left:15.6px;top:188.5px;font-size:15.2px;color:#f8f8f8;font-family:'DejaVu Sans','Liberation Sans',sans-serif;font-weight:700;transform:scaleX(1.1753);">ΔE 2000</span>
<span class="t" style="left:182.8px;top:188.5px;font-size:15.2px;color:#ececec;font-family:'DejaVu Sans','Liberation Sans',sans-serif;transform:scaleX(1.1711);">5,1983</span>
<span class="t" style="left:280.0px;top:188.5px;font-size:15.2px;color:#ececec;font-family:'DejaVu Sans','Liberation Sans',sans-serif;transform:scaleX(1.1711);">3,7578</span>
<span class="t" style="left:376.9px;top:188.5px;font-size:15.2px;color:#ececec;font-family:'DejaVu Sans','Liberation Sans',sans-serif;transform:scaleX(1.1711);">3,3128</span>
<span class="t" style="left:474.5px;top:188.5px;font-size:15.2px;color:#ececec;font-family:'DejaVu Sans','Liberation Sans',sans-serif;transform:scaleX(1.1711);">3,6696</span>
<span class="t" style="left:559.7px;top:188.5px;font-size:15.2px;color:#ececec;font-family:'DejaVu Sans','Liberation Sans',sans-serif;transform:scaleX(1.1711);">3,3694</span>
<span class="t" style="left:645.7px;top:188.5px;font-size:15.2px;color:#ececec;font-family:'DejaVu Sans','Liberation Sans',sans-serif;transform:scaleX(1.1711);">0,8102</span>
<span class="t" style="left:738.6px;top:188.5px;font-size:15.2px;color:#ececec;font-family:'DejaVu Sans','Liberation Sans',sans-serif;transform:scaleX(1.1711);">2,3292</span>
<span class="t" style="left:833.0px;top:188.5px;font-size:15.2px;color:#ececec;font-family:'DejaVu Sans','Liberation Sans',sans-serif;transform:scaleX(1.1711);">2,2733</span>
<span class="t" style="left:918.8px;top:188.5px;font-size:15.2px;color:#ececec;font-family:'DejaVu Sans','Liberation Sans',sans-serif;transform:scaleX(1.1711);">0,9514</span>
<span class="t" style="left:1004.0px;top:188.5px;font-size:15.2px;color:#ececec;font-family:'DejaVu Sans','Liberation Sans',sans-serif;transform:scaleX(1.1711);">1,3979</span>
<span class="t" style="left:1118.5px;top:188.5px;font-size:15.2px;color:#ececec;font-family:'DejaVu Sans','Liberation Sans',sans-serif;transform:scaleX(1.1711);">1,8363</span>
<span class="t" style="left:1240.9px;top:188.5px;font-size:15.2px;color:#ececec;font-family:'DejaVu Sans','Liberation Sans',sans-serif;transform:scaleX(1.1711);">0,4351</span>
<span class="t" style="left:1326.6px;top:188.5px;font-size:15.2px;color:#ececec;font-family:'DejaVu Sans','Liberation Sans',sans-serif;transform:scaleX(1.1711);">1,5272</span>
<span class="t" style="left:1452.3px;top:188.5px;font-size:15.2px;color:#ececec;font-family:'DejaVu Sans','Liberation Sans',sans-serif;transform:scaleX(1.1711);">1,3521</span>
<div class="b" style="left:0px;top:207.3px;width:1485px;height:26.02px;background:#808080;"></div>
<span class="t" style="left:15.6px;top:214.2px;font-size:15.2px;color:#f8f8f8;font-family:'DejaVu Sans','Liberation Sans',sans-serif;font-weight:700;transform:scaleX(1.1912);">ΔE ITP</span>
<span class="t" style="left:182.8px;top:214.2px;font-size:15.2px;color:#ececec;font-family:'DejaVu Sans','Liberation Sans',sans-serif;transform:scaleX(1.1711);">3,2667</span>
<span class="t" style="left:280.0px;top:214.2px;font-size:15.2px;color:#ececec;font-family:'DejaVu Sans','Liberation Sans',sans-serif;transform:scaleX(1.1711);">2,7044</span>
<span class="t" style="left:376.9px;top:214.2px;font-size:15.2px;color:#ececec;font-family:'DejaVu Sans','Liberation Sans',sans-serif;transform:scaleX(1.1711);">2,4862</span>
<span class="t" style="left:474.5px;top:214.2px;font-size:15.2px;color:#ececec;font-family:'DejaVu Sans','Liberation Sans',sans-serif;transform:scaleX(1.1711);">3,0695</span>
<span class="t" style="left:559.7px;top:214.2px;font-size:15.2px;color:#ececec;font-family:'DejaVu Sans','Liberation Sans',sans-serif;transform:scaleX(1.1711);">2,9845</span>
<span class="t" style="left:645.7px;top:214.2px;font-size:15.2px;color:#ececec;font-family:'DejaVu Sans','Liberation Sans',sans-serif;transform:scaleX(1.1711);">3,3943</span>
<span class="t" style="left:738.6px;top:214.2px;font-size:15.2px;color:#ececec;font-family:'DejaVu Sans','Liberation Sans',sans-serif;transform:scaleX(1.1711);">3,6710</span>
<span class="t" style="left:833.0px;top:214.2px;font-size:15.2px;color:#ececec;font-family:'DejaVu Sans','Liberation Sans',sans-serif;transform:scaleX(1.1711);">3,5886</span>
<span class="t" style="left:918.8px;top:214.2px;font-size:15.2px;color:#ececec;font-family:'DejaVu Sans','Liberation Sans',sans-serif;transform:scaleX(1.1711);">3,0398</span>
<span class="t" style="left:1004.0px;top:214.2px;font-size:15.2px;color:#ececec;font-family:'DejaVu Sans','Liberation Sans',sans-serif;transform:scaleX(1.1711);">3,0241</span>
<span class="t" style="left:1118.5px;top:214.2px;font-size:15.2px;color:#ececec;font-family:'DejaVu Sans','Liberation Sans',sans-serif;transform:scaleX(1.1711);">3,5391</span>
<span class="t" style="left:1240.9px;top:214.2px;font-size:15.2px;color:#ececec;font-family:'DejaVu Sans','Liberation Sans',sans-serif;transform:scaleX(1.1711);">1,6510</span>
<span class="t" style="left:1326.6px;top:214.2px;font-size:15.2px;color:#ececec;font-family:'DejaVu Sans','Liberation Sans',sans-serif;transform:scaleX(1.1711);">5,0330</span>
<span class="t" style="left:1452.3px;top:214.2px;font-size:15.2px;color:#ececec;font-family:'DejaVu Sans','Liberation Sans',sans-serif;transform:scaleX(1.1711);">3,6612</span>
</div>
<div class="b" style="left:366px;top:881.5px;width:1484px;height:15px;background:#606060;"></div>
<div class="b" style="left:367px;top:883.5px;width:16px;height:11px;background:#868686;border-radius:4px;border:1px solid #9a9a9a"></div>
<div class="b" style="left:1831px;top:883.5px;width:16px;height:11px;background:#868686;border-radius:4px;border:1px solid #9a9a9a"></div>
<svg class="b" style="left:366px;top:881.5px" width="1484" height="15"><path d="M6.5 7.5 L12.5 2.5 V12.5Z M1477.5 7.5 L1471.5 2.5 V12.5Z" fill="#484848" transform="translate(0 .8)"/></svg>
<div class="b" style="left:389px;top:883.5px;width:462px;height:11px;background:#484848;border-radius:5.5px"></div>
<div class="b" style="left:0px;top:902px;width:46px;height:4px;background:#111;border-radius:0 4px 0 0"></div>
<div class="b" style="left:51px;top:902px;width:73px;height:6px;background:#a8a8a8;border-radius:5px 5px 0 0"></div>
<div class="b" style="left:129px;top:902px;width:73px;height:6px;background:#a8a8a8;border-radius:5px 5px 0 0"></div>
<div class="b" style="left:207px;top:902px;width:73px;height:6px;background:#a8a8a8;border-radius:5px 5px 0 0"></div>
<div class="b" style="left:285px;top:902px;width:73px;height:6px;background:#a8a8a8;border-radius:5px 5px 0 0"></div>
<div class="b" style="left:363px;top:902px;width:73px;height:6px;background:#a8a8a8;border-radius:5px 5px 0 0"></div>
<div class="b" style="left:441px;top:902px;width:73px;height:6px;background:#a8a8a8;border-radius:5px 5px 0 0"></div>
<div class="b" style="left:519px;top:902px;width:73px;height:6px;background:#a8a8a8;border-radius:5px 5px 0 0"></div>
<div class="b" style="left:597px;top:902px;width:73px;height:6px;background:#a8a8a8;border-radius:5px 5px 0 0"></div>
<div class="b" style="left:675px;top:902px;width:73px;height:6px;background:#a8a8a8;border-radius:5px 5px 0 0"></div>
<div class="b" style="left:753px;top:902px;width:73px;height:6px;background:#a8a8a8;border-radius:5px 5px 0 0"></div>
<div class="b" style="left:831px;top:902px;width:73px;height:6px;background:#a8a8a8;border-radius:5px 5px 0 0"></div>
<div class="b" style="left:909px;top:902px;width:73px;height:6px;background:#a8a8a8;border-radius:5px 5px 0 0"></div>
<div class="b" style="left:987px;top:902px;width:73px;height:6px;background:#a8a8a8;border-radius:5px 5px 0 0"></div>
<div class="b" style="left:1065px;top:902px;width:73px;height:6px;background:#a8a8a8;border-radius:5px 5px 0 0"></div>
<div class="b" style="left:1143px;top:902px;width:73px;height:6px;background:#a8a8a8;border-radius:5px 5px 0 0"></div>
<div class="b" style="left:1221px;top:902px;width:73px;height:6px;background:#a8a8a8;border-radius:5px 5px 0 0"></div>
<div class="b" style="left:1299px;top:902px;width:73px;height:6px;background:#a8a8a8;border-radius:5px 5px 0 0"></div>
<div class="b" style="left:1377px;top:902px;width:27px;height:6px;background:#a8a8a8;border-radius:5px 5px 0 0"></div>
<div class="b" style="left:1407px;top:901.6px;width:72px;height:6px;background:#a8a8a8;border-radius:1px 1px 0 0"></div>
<div class="b" style="left:1480.5px;top:901.6px;width:69.5px;height:6px;background:#a8a8a8;border-radius:1px 1px 0 0"></div>
<div class="b" style="left:1552px;top:901.6px;width:65.5px;height:6px;background:#a8a8a8;border-radius:1px 1px 0 0"></div>
<div class="b" style="left:1619px;top:901.6px;width:65px;height:6px;background:#a8a8a8;border-radius:1px 1px 0 0"></div>
<div class="b" style="left:1686px;top:901.6px;width:65px;height:6px;background:#a8a8a8;border-radius:1px 1px 0 0"></div>
<div class="b" style="left:1752px;top:901.6px;width:68px;height:6px;background:#464646;border-radius:1px 1px 0 0"></div>
<div class="b" style="left:1821px;top:901.6px;width:49px;height:6px;background:#a8a8a8;border-radius:1px 1px 0 0"></div>
<div class="b" style="left:1850px;top:646px;width:2px;height:251px;background:#050505;"></div>
</body></html>
